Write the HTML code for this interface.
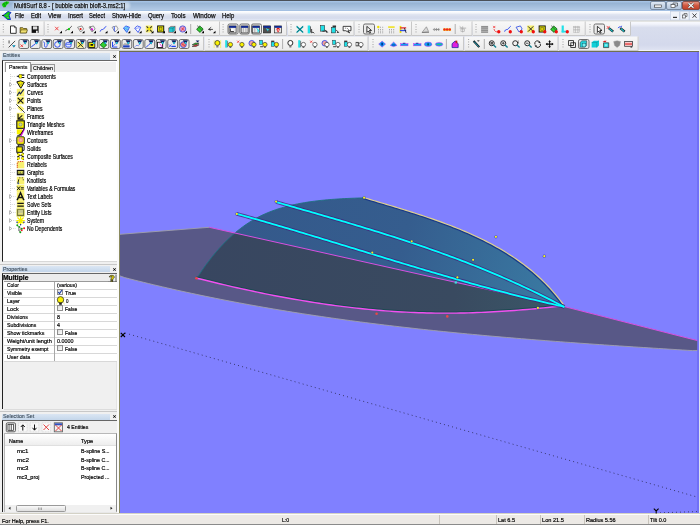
<!DOCTYPE html><html><head><meta charset="utf-8"><style>
html,body{margin:0;padding:0;width:700px;height:525px;overflow:hidden;background:#f0f0f0;position:relative;font-family:"Liberation Sans",sans-serif;}
.t{position:absolute;white-space:nowrap;line-height:1;transform-origin:0 0;}
svg{position:absolute;left:0;top:0;}
</style></head><body>
<div style="position:absolute;left:0px;top:0px;width:700px;height:11px;background:linear-gradient(#4a5058 0px,#4a5058 1px,#a8c8ee 1px,#a0bcdc 2px,#98b4d4 3.5px,#b0c8e4 9.5px,#a4c0e2 10px,#a4c0e2 11px);"></div>
<div style="position:absolute;left:12.5px;top:1.8px;width:117px;height:7.6px;background:rgba(235,242,250,0.55);filter:blur(0.8px);border-radius:3px;"></div>
<div class="t" style="left:13.60px;top:3.19px;font-size:6.45px;font-weight:normal;color:#111;transform:scaleX(0.906) translateZ(0);-webkit-text-stroke:0.25px #111;">MultiSurf 8.8 - [ bubble cabin bloft-3.ms2:1]</div>
<svg width="12" height="10" viewBox="0 0 12 10" style="position:absolute;left:0;top:0"><path d="M1.5,4 L4,2 L6.5,1 L9.5,1.5 L9,3.5 L7,5 L5.5,7.5 L3.5,7.8 L2,6 Z" fill="#10d010" stroke="#d8a8f0" stroke-width="0.5"/><circle cx="4" cy="4" r="0.8" fill="#0a800a"/><circle cx="6.5" cy="3" r="0.8" fill="#0a800a"/><circle cx="5" cy="6" r="0.7" fill="#0a800a"/></svg>
<svg width="52" height="12" viewBox="0 0 52 12" style="position:absolute;left:649px;top:0"><rect x="1.5" y="1.5" width="15" height="8" rx="1.5" fill="url(#wb)" stroke="#6a7c94" stroke-width="0.8"/><rect x="17.5" y="1.5" width="15" height="8" rx="1.5" fill="url(#wb)" stroke="#6a7c94" stroke-width="0.8"/><rect x="33.5" y="1.5" width="17" height="8" rx="1.5" fill="url(#wr)" stroke="#7a3a30" stroke-width="0.8"/><rect x="5.5" y="5" width="7" height="2.2" fill="#fff" stroke="#333" stroke-width="0.6"/><rect x="22" y="4.5" width="4" height="3" fill="#fff" stroke="#333" stroke-width="0.6"/><path d="M24,4.5 V3 H28.5 V6 H26" fill="none" stroke="#333" stroke-width="0.6"/><path d="M39.5,3.2 L44.5,7.8 M44.5,3.2 L39.5,7.8" stroke="#333" stroke-width="2.2"/><path d="M39.5,3.2 L44.5,7.8 M44.5,3.2 L39.5,7.8" stroke="#fff" stroke-width="1.2"/><defs><linearGradient id="wb" x1="0" y1="0" x2="0" y2="1"><stop offset="0" stop-color="#e4ecf6"/><stop offset="0.5" stop-color="#c8d6e8"/><stop offset="1" stop-color="#b0c4dc"/></linearGradient><linearGradient id="wr" x1="0" y1="0" x2="0" y2="1"><stop offset="0" stop-color="#e8a090"/><stop offset="0.5" stop-color="#d05840"/><stop offset="1" stop-color="#c04028"/></linearGradient></defs></svg>
<div style="position:absolute;left:0px;top:11px;width:700px;height:10px;background:linear-gradient(#ffffff 0px,#f4f6fb 2px,#e0e5f1 3.5px,#d6dcec 6px,#d8deee 8px,#e4eaf8 9px,#e6ecf8 10px);"></div>
<svg width="14" height="10" viewBox="0 0 14 10" style="position:absolute;left:0;top:11px"><path d="M3,4.5 L8,0.5 L11,1.5 L9,4 L10.5,8.5 L7.5,8.5 Z" fill="#10d010" stroke="#1020d0" stroke-width="0.9"/><path d="M2,4.5 H4" stroke="#111" stroke-width="0.9"/><circle cx="7" cy="4" r="0.6" fill="#c070c0"/><circle cx="8" cy="6.5" r="0.6" fill="#c070c0"/></svg>
<div class="t" style="left:15.00px;top:13.26px;font-size:6.72px;font-weight:normal;color:#111;transform:scaleX(0.831) translateZ(0);-webkit-text-stroke:0.25px #111;">File</div>
<div class="t" style="left:31.00px;top:13.26px;font-size:6.72px;font-weight:normal;color:#111;transform:scaleX(0.863) translateZ(0);-webkit-text-stroke:0.25px #111;">Edit</div>
<div class="t" style="left:48.00px;top:13.26px;font-size:6.72px;font-weight:normal;color:#111;transform:scaleX(0.900) translateZ(0);-webkit-text-stroke:0.25px #111;">View</div>
<div class="t" style="left:67.50px;top:13.26px;font-size:6.72px;font-weight:normal;color:#111;transform:scaleX(0.892) translateZ(0);-webkit-text-stroke:0.25px #111;">Insert</div>
<div class="t" style="left:89.00px;top:13.26px;font-size:6.72px;font-weight:normal;color:#111;transform:scaleX(0.857) translateZ(0);-webkit-text-stroke:0.25px #111;">Select</div>
<div class="t" style="left:112.00px;top:13.26px;font-size:6.72px;font-weight:normal;color:#111;transform:scaleX(0.882) translateZ(0);-webkit-text-stroke:0.25px #111;">Show-Hide</div>
<div class="t" style="left:148.00px;top:13.26px;font-size:6.72px;font-weight:normal;color:#111;transform:scaleX(0.874) translateZ(0);-webkit-text-stroke:0.25px #111;">Query</div>
<div class="t" style="left:171.00px;top:13.26px;font-size:6.72px;font-weight:normal;color:#111;transform:scaleX(0.924) translateZ(0);-webkit-text-stroke:0.25px #111;">Tools</div>
<div class="t" style="left:192.50px;top:13.26px;font-size:6.72px;font-weight:normal;color:#111;transform:scaleX(0.941) translateZ(0);-webkit-text-stroke:0.25px #111;">Window</div>
<div class="t" style="left:221.75px;top:13.26px;font-size:6.72px;font-weight:normal;color:#111;transform:scaleX(0.886) translateZ(0);-webkit-text-stroke:0.25px #111;">Help</div>
<svg width="32" height="10" viewBox="0 0 32 10" style="position:absolute;left:669px;top:11px"><rect x="1.5" y="0.5" width="9" height="8.5" fill="#f0f3fa" stroke="#c0cce0" stroke-width="0.6"/><rect x="11" y="0.5" width="9" height="8.5" fill="#f0f3fa" stroke="#c0cce0" stroke-width="0.6"/><rect x="20.5" y="0.5" width="10" height="8.5" fill="#f0f3fa" stroke="#c0cce0" stroke-width="0.6"/><rect x="4" y="5.8" width="4" height="1.2" fill="#333"/><rect x="13.5" y="4" width="3" height="3" fill="none" stroke="#555" stroke-width="0.7"/><path d="M15,4 V2.5 H18 V5.5 H16.5" fill="none" stroke="#555" stroke-width="0.7"/><path d="M23.5,2.5 L27.5,6.8 M27.5,2.5 L23.5,6.8" stroke="#333" stroke-width="0.9"/></svg>
<svg width="700" height="52" viewBox="0 0 700 52" style="position:absolute;left:0;top:0"><defs><linearGradient id="tbg" x1="0" y1="0" x2="0" y2="1"><stop offset="0" stop-color="#f8f8f8"/><stop offset="1" stop-color="#ebebeb"/></linearGradient><linearGradient id="rbg" x1="0" y1="0" x2="0" y2="1"><stop offset="0" stop-color="#fbfcff"/><stop offset="0.1" stop-color="#f2f4fb"/><stop offset="0.22" stop-color="#d8dded"/><stop offset="0.8" stop-color="#d4d9ec"/><stop offset="0.97" stop-color="#dfe3f2"/></linearGradient></defs><rect x="0" y="21" width="700" height="30" fill="url(#rbg)"/><rect x="0" y="20.6" width="700" height="0.8" fill="#c4c2b8"/><rect x="0" y="50" width="700" height="1" fill="#f2f4fa"/><rect x="0" y="21.5" width="44.6" height="14.5" fill="url(#tbg)"/><path d="M44.1,21.5 V35.5 H0" fill="none" stroke="#c8c8c8" stroke-width="1"/><rect x="45" y="21.5" width="175" height="14.5" fill="url(#tbg)"/><path d="M219.5,21.5 V35.5 H45" fill="none" stroke="#c8c8c8" stroke-width="1"/><rect x="220" y="21.5" width="67" height="14.5" fill="url(#tbg)"/><path d="M286.5,21.5 V35.5 H220" fill="none" stroke="#c8c8c8" stroke-width="1"/><rect x="288" y="21.5" width="66.5" height="14.5" fill="url(#tbg)"/><path d="M354.0,21.5 V35.5 H288" fill="none" stroke="#c8c8c8" stroke-width="1"/><rect x="355" y="21.5" width="57" height="14.5" fill="url(#tbg)"/><path d="M411.5,21.5 V35.5 H355" fill="none" stroke="#c8c8c8" stroke-width="1"/><rect x="412" y="21.5" width="60.5" height="14.5" fill="url(#tbg)"/><path d="M472.0,21.5 V35.5 H412" fill="none" stroke="#c8c8c8" stroke-width="1"/><rect x="473" y="21.5" width="112.70000000000005" height="14.5" fill="url(#tbg)"/><path d="M585.2,21.5 V35.5 H473" fill="none" stroke="#c8c8c8" stroke-width="1"/><rect x="586" y="21.5" width="45" height="14.5" fill="url(#tbg)"/><path d="M630.5,21.5 V35.5 H586" fill="none" stroke="#c8c8c8" stroke-width="1"/><path d="M3.3,24 V34" stroke="#909090" stroke-width="0.9" stroke-dasharray="0.9,1.6"/><path d="M48,24 V34" stroke="#909090" stroke-width="0.9" stroke-dasharray="0.9,1.6"/><path d="M223.1,24 V34" stroke="#909090" stroke-width="0.9" stroke-dasharray="0.9,1.6"/><path d="M291,24 V34" stroke="#909090" stroke-width="0.9" stroke-dasharray="0.9,1.6"/><path d="M359,24 V34" stroke="#909090" stroke-width="0.9" stroke-dasharray="0.9,1.6"/><path d="M416,24 V34" stroke="#909090" stroke-width="0.9" stroke-dasharray="0.9,1.6"/><path d="M476,24 V34" stroke="#909090" stroke-width="0.9" stroke-dasharray="0.9,1.6"/><path d="M590,24 V34" stroke="#909090" stroke-width="0.9" stroke-dasharray="0.9,1.6"/><path d="M190.7,24 V34" stroke="#a8a8a8" stroke-width="0.9"/><path d="M455.2,24 V34" stroke="#a8a8a8" stroke-width="0.9"/><g transform="translate(9.2,25.5) scale(0.87)"><path d="M1.5,0.5 h4.5 l2,2 v6.5 h-6.5 z" fill="#fff" stroke="#000" stroke-width="0.9"/><path d="M6,0.5 v2 h2" fill="none" stroke="#000" stroke-width="0.6"/></g><g transform="translate(19.7,25.5) scale(0.87)"><path d="M0.5,2.5 h3 l1,1 h3.5 v5 h-7.5 z" fill="#d8c040" stroke="#3a3000" stroke-width="0.8"/><path d="M1.5,5 h7.5 l-1.5,3.5 h-7 z" fill="#f0e070" stroke="#3a3000" stroke-width="0.6"/></g><g transform="translate(31.2,25.5) scale(0.87)"><rect x="0.5" y="0.5" width="8" height="8" fill="#111"/><rect x="2" y="1" width="5" height="3.5" fill="#ddd"/><rect x="5.5" y="6" width="2" height="2.5" fill="#eee"/></g><g transform="translate(54.2,25.5) scale(0.87)"><path d="M1,1.5 L5,5.5 M5,1.5 L1,5.5" stroke="#f03030" stroke-width="1"/><path d="M6,9 L9,9 L9,6 Z" fill="#000"/></g><g transform="translate(65.2,25.5) scale(0.87)"><path d="M0.5,6.5 C2,3 3,6 5,3.5 S7,1 7.5,1" fill="none" stroke="#222" stroke-width="1"/><circle cx="4.3" cy="4.2" r="1.3" fill="#10d010"/><path d="M6,9 L9,9 L9,6 Z" fill="#000"/></g><g transform="translate(76.7,25.5) scale(0.87)"><path d="M1,2 L6,0.5 L8,4 L4.5,7.5 Z" fill="#f4f4f4" stroke="#666" stroke-width="0.8"/><circle cx="4.5" cy="4" r="1.2" fill="#e01010"/><path d="M6,9 L9,9 L9,6 Z" fill="#000"/></g><g transform="translate(88.2,25.5) scale(0.87)"><path d="M1,2 L6,0.5 L8,4 L4.5,7.5 Z" fill="#f4f4f4" stroke="#666" stroke-width="0.8"/><path d="M2,1 L5,6" stroke="#222" stroke-width="0.8"/><circle cx="4.5" cy="4.5" r="1.2" fill="#e010e0"/><path d="M6,9 L9,9 L9,6 Z" fill="#000"/></g><g transform="translate(99.7,25.5) scale(0.87)"><path d="M0.5,7 C2,3 3,6 5,3.5 S7,1 7.5,1" fill="none" stroke="#1a3af0" stroke-width="1.1"/><path d="M6,9 L9,9 L9,6 Z" fill="#000"/></g><g transform="translate(111.2,25.5) scale(0.87)"><path d="M1,2 L6,0.5 L8,4 L4.5,7.5 Z" fill="#f4f4f4" stroke="#777" stroke-width="0.8"/><path d="M3,1 C5,3 2,5 4.5,7" fill="none" stroke="#2040f0" stroke-width="1"/><path d="M6,9 L9,9 L9,6 Z" fill="#000"/></g><g transform="translate(122.5,25.5) scale(0.87)"><path d="M1,3 L4,0.5 L8,2 L5,8 Z" fill="#80f0f8" stroke="#2040f0" stroke-width="0.9"/><path d="M2,3.5 L6.5,2.5 M3,5.5 L6,4.5" stroke="#2040f0" stroke-width="0.6"/><path d="M6,9 L9,9 L9,6 Z" fill="#000"/></g><g transform="translate(133.79999999999998,25.5) scale(0.87)"><path d="M1,3 L4,0.5 L8,2 L5,8 Z" fill="#fff" stroke="#2040f0" stroke-width="0.9"/><path d="M2,3.5 L6.5,2.5" stroke="#2040f0" stroke-width="0.6"/><path d="M6,9 L9,9 L9,6 Z" fill="#000"/></g><g transform="translate(145.7,25.5) scale(0.87)"><rect x="0" y="0" width="8" height="8" fill="#f8f070"/><path d="M1,1 L7,7 M7,1 L1,7" stroke="#222" stroke-width="1.2"/><rect x="2.5" y="2.5" width="3" height="3" fill="#f0e000"/><path d="M6,9 L9,9 L9,6 Z" fill="#000"/></g><g transform="translate(157.2,25.5) scale(0.87)"><rect x="0.5" y="0.5" width="7" height="7" fill="#f0f000" stroke="#111" stroke-width="1.1"/><rect x="2.5" y="2.5" width="3" height="3" fill="#e0d000" stroke="#333" stroke-width="0.5"/><path d="M6,9 L9,9 L9,6 Z" fill="#000"/></g><g transform="translate(168.2,25.5) scale(0.87)"><path d="M0.5,3 L3,1 H8 V6 L5.5,8 H0.5 Z" fill="#20c8d0" stroke="#c04040" stroke-width="0.6"/><path d="M0.5,3 H5.5 V8 M5.5,3 L8,1" fill="none" stroke="#106070" stroke-width="0.6"/><path d="M6,9 L9,9 L9,6 Z" fill="#000"/></g><g transform="translate(179.2,25.5) scale(0.87)"><circle cx="4" cy="4" r="3.6" fill="#e8a0c8" stroke="#3050e0" stroke-width="0.9"/><path d="M2.5,2.5 L6,6 M5.5,2 L2.5,6" stroke="#e02020" stroke-width="0.8"/><path d="M6,9 L9,9 L9,6 Z" fill="#000"/></g><g transform="translate(196.2,25.5) scale(0.87)"><path d="M4,0.5 L8,4 L4.5,8 L0.5,4.5 Z" fill="#30d030" stroke="#105010" stroke-width="0.9"/><path d="M1,0 L8,7" stroke="#222" stroke-width="0.6"/><path d="M6,9 L9,9 L9,6 Z" fill="#000"/></g><g transform="translate(207.7,25.5) scale(0.87)"><path d="M1,4.5 L4,2 M1,4.5 L3.5,5.5 M1,4.5 H6" stroke="#222" stroke-width="0.9" fill="none"/><path d="M6,9 L9,9 L9,6 Z" fill="#000"/></g><g transform="translate(296.2,25.5) scale(0.87)"><path d="M0.5,1 L8,8 M8,1 L0.5,8" stroke="#10c0d0" stroke-width="1.6"/><path d="M0.5,1 L8,8 M8,1 L0.5,8" stroke="#111" stroke-width="0.6"/></g><g transform="translate(307.7,25.5) scale(0.87)"><rect x="0" y="0" width="2.8" height="9" fill="#20e0e8"/><rect x="2.8" y="1" width="1" height="7" fill="#555"/><path d="M4.5,4 V8.5 L6,7.5 L7.5,9" fill="none" stroke="#111" stroke-width="0.9"/></g><g transform="translate(320.7,25.5) scale(0.87)"><rect x="0" y="0" width="4.5" height="6.5" fill="#20e0e8" stroke="#222" stroke-width="0.6"/><path d="M2,6.5 H7 V8.5 M5,5 L8,8" fill="none" stroke="#111" stroke-width="0.9"/></g><g transform="translate(331.7,25.5) scale(0.87)"><rect x="0" y="2" width="4.5" height="6.5" fill="#20e0e8" stroke="#222" stroke-width="0.6"/><rect x="1" y="0" width="4" height="2" fill="#333"/><path d="M5,5 L8,8 L6,8" fill="none" stroke="#111" stroke-width="0.9"/></g><g transform="translate(342.7,25.5) scale(0.87)"><path d="M0.5,1 H9.5 V6 H6 L8,8.5 L3.5,6 H0.5 Z" fill="#fff" stroke="#111" stroke-width="0.9"/><path d="M2.5,3 h1.5 M5,3 L7,5" stroke="#333" stroke-width="0.7"/></g><g transform="translate(376.7,25.5) scale(0.87)"><circle cx="1.8" cy="1.8" r="1.4" fill="#f0e000"/><rect x="1.5" y="4" width="0.9" height="0.9" fill="#777"/><rect x="1.5" y="6" width="0.9" height="0.9" fill="#777"/><rect x="1.5" y="8" width="0.9" height="0.9" fill="#777"/><rect x="4" y="4" width="0.9" height="0.9" fill="#777"/><rect x="4" y="6" width="0.9" height="0.9" fill="#777"/><rect x="4" y="8" width="0.9" height="0.9" fill="#777"/><rect x="6.5" y="4" width="0.9" height="0.9" fill="#777"/><rect x="6.5" y="6" width="0.9" height="0.9" fill="#777"/><rect x="6.5" y="8" width="0.9" height="0.9" fill="#777"/><rect x="4" y="1.5" width="0.9" height="0.9" fill="#777"/><rect x="6.5" y="1.5" width="0.9" height="0.9" fill="#777"/></g><g transform="translate(387.7,25.5) scale(0.87)"><rect x="0.5" y="1" width="7.5" height="1.6" fill="#f0e000"/><rect x="1.5" y="4" width="0.9" height="0.9" fill="#777"/><rect x="1.5" y="6" width="0.9" height="0.9" fill="#777"/><rect x="1.5" y="8" width="0.9" height="0.9" fill="#777"/><rect x="4" y="4" width="0.9" height="0.9" fill="#777"/><rect x="4" y="6" width="0.9" height="0.9" fill="#777"/><rect x="4" y="8" width="0.9" height="0.9" fill="#777"/><rect x="6.5" y="4" width="0.9" height="0.9" fill="#777"/><rect x="6.5" y="6" width="0.9" height="0.9" fill="#777"/><rect x="6.5" y="8" width="0.9" height="0.9" fill="#777"/></g><g transform="translate(399.2,25.5) scale(0.87)"><rect x="0.5" y="0.5" width="2" height="8" fill="#f0e000"/><rect x="1" y="2" width="7" height="1.5" fill="#e03030"/><rect x="1" y="5" width="7" height="1.5" fill="#3050e0"/><path d="M6,3 L8,8.5" stroke="#111" stroke-width="0.9"/></g><g transform="translate(421.2,25.5) scale(0.87)"><path d="M1,8 L6,1.5 L8.5,7 Z" fill="#d8d8d8" stroke="#888" stroke-width="0.8"/><path d="M1,8 H9" stroke="#666" stroke-width="0.8"/></g><g transform="translate(432.2,25.5) scale(0.87)"><path d="M0.5,4.5 L3,2.5 V6.5 Z M3,4.5 L5.5,2.5 V6.5 Z M5.5,4.5 L8,2.5 V6.5 Z" fill="#999"/><rect x="3" y="4" width="5.5" height="1" fill="#888"/></g><g transform="translate(443.2,25.5) scale(0.87)"><rect x="0" y="3.5" width="9" height="2.5" fill="#f0e000"/><circle cx="1.5" cy="4.7" r="1.4" fill="#f02020"/><circle cx="4.5" cy="4.7" r="1.4" fill="#f02020"/><circle cx="7.5" cy="4.7" r="1.4" fill="#f02020"/></g><g transform="translate(459.2,25.5) scale(0.87)"><path d="M0.5,1 L4,4 M0.5,3 L8,3 M4,1 V8" stroke="#aaa" stroke-width="0.9"/><rect x="2" y="4" width="4" height="3" fill="none" stroke="#aaa" stroke-width="0.7"/></g><g transform="translate(480.7,25.5) scale(0.87)"><rect x="0.5" y="0.5" width="8" height="8" fill="#909090"/><rect x="0.5" y="2.5" width="8" height="0.6" fill="#c8c8c8"/><rect x="0.5" y="4.5" width="8" height="0.6" fill="#c8c8c8"/><rect x="0.5" y="6.5" width="8" height="0.6" fill="#c8c8c8"/></g><g transform="translate(492.7,25.5) scale(0.87)"><path d="M0.5,0.5 L3,3 M3,0.5 L0.5,3" stroke="#f02020" stroke-width="0.8"/><path d="M1.5,4 C2,7 4,7.5 6,7.3" fill="none" stroke="#f02020" stroke-width="0.9"/><circle cx="7" cy="7.2" r="1.9" fill="#f01010"/></g><g transform="translate(504.2,25.5) scale(0.87)"><path d="M0.5,7 C2,3 3,6 5,3.5 S7,1 7.5,1" fill="none" stroke="#1a3af0" stroke-width="1.1"/><circle cx="7" cy="7.2" r="1.9" fill="#f01010"/></g><g transform="translate(515.2,25.5) scale(0.87)"><path d="M1,2 L6,0.5 L8,4 L4.5,7.5 Z" fill="#f4f4f4" stroke="#2040e0" stroke-width="0.9"/><circle cx="7" cy="7.2" r="1.9" fill="#f01010"/></g><g transform="translate(527.2,25.5) scale(0.87)"><rect x="0" y="0" width="8" height="8" fill="#f8f070"/><path d="M1,1 L7,7 M7,1 L1,7" stroke="#222" stroke-width="1.1"/><circle cx="7" cy="7.2" r="1.9" fill="#f01010"/></g><g transform="translate(538.7,25.5) scale(0.87)"><rect x="0.5" y="0.5" width="7" height="7" fill="#f0f000" stroke="#111" stroke-width="1.1"/><rect x="2.5" y="2.5" width="3" height="3" fill="#e0d000" stroke="#333" stroke-width="0.5"/><circle cx="7" cy="7.2" r="1.9" fill="#f01010"/></g><g transform="translate(550.2,25.5) scale(0.87)"><path d="M4,0.5 L8,4 L4.5,8 L0.5,4.5 Z" fill="#30d030" stroke="#105010" stroke-width="0.9"/><path d="M1,0 L8,7" stroke="#222" stroke-width="0.6"/><circle cx="7" cy="7.2" r="1.9" fill="#f01010"/></g><g transform="translate(561.2,25.5) scale(0.87)"><rect x="0.5" y="0" width="2.5" height="8" fill="#20e0e8"/><rect x="0.5" y="6" width="6" height="2" fill="#20e0e8"/><circle cx="7" cy="7.2" r="1.9" fill="#f01010"/></g><g transform="translate(572.7,25.5) scale(0.87)"><path d="M0.5,2 H8.5 M0.5,5 H8.5 M3,0.5 V8.5 M6,0.5 V8.5" stroke="#aaa" stroke-width="0.8"/><rect x="1" y="1" width="7" height="7" fill="none" stroke="#bbb" stroke-width="0.6"/></g><g transform="translate(606.2,25.5) scale(0.87)"><path d="M0.5,0.5 L4,4 M4,0.5 L0.5,4" stroke="#f02020" stroke-width="0.8"/><path d="M3,3 L8,7" stroke="#111" stroke-width="2.8"/><path d="M3.5,3.5 L7.5,6.8" stroke="#20c0c8" stroke-width="1.4"/></g><g transform="translate(617.7,25.5) scale(0.87)"><path d="M0.5,3 C2,0 3,3 5,0.5" fill="none" stroke="#2040f0" stroke-width="1"/><path d="M3,3 L8,7" stroke="#111" stroke-width="2.8"/><path d="M3.5,3.5 L7.5,6.8" stroke="#20c0c8" stroke-width="1.4"/></g><rect x="228.0" y="24.0" width="10.0" height="10.0" rx="1.6" fill="#ececec" stroke="#6e6e6e" stroke-width="1"/><rect x="239.8" y="24.0" width="9.5" height="10.0" rx="1.6" fill="#ececec" stroke="#6e6e6e" stroke-width="1"/><rect x="251.5" y="24.0" width="10" height="10.0" rx="1.6" fill="#ececec" stroke="#6e6e6e" stroke-width="1"/><g transform="translate(228.7,25.5) scale(0.87)"><rect x="0.5" y="0.5" width="8" height="8" fill="#e8e8e8" stroke="#333" stroke-width="0.8"/><rect x="0.5" y="0.5" width="8" height="2.2" fill="#102890"/><path d="M2,3.5 V7 H6" fill="none" stroke="#000" stroke-width="0.9"/><rect x="2.5" y="4" width="3" height="2" fill="#fff"/></g><g transform="translate(240.7,25.5) scale(0.87)"><rect x="0.5" y="0.5" width="8" height="8" fill="#e8e8e8" stroke="#333" stroke-width="0.8"/><rect x="0.5" y="0.5" width="8" height="2.2" fill="#102890"/><path d="M3,3 V8 M6,3 V8" stroke="#888" stroke-width="0.7"/></g><g transform="translate(252.2,25.5) scale(0.87)"><rect x="0.5" y="0.5" width="8" height="8" fill="#e8e8e8" stroke="#333" stroke-width="0.8"/><rect x="0.5" y="0.5" width="8" height="2.2" fill="#102890"/><path d="M3,3 V8" stroke="#888" stroke-width="0.7"/><path d="M5,3 L8,6 L6.5,6.5 L7,8" fill="#20d8e8" stroke="#20d8e8" stroke-width="1"/></g><g transform="translate(263.2,25.5) scale(0.87)"><rect x="0.5" y="0.5" width="8" height="8" fill="#505050" stroke="#222" stroke-width="0.8"/><rect x="0.5" y="0.5" width="8" height="2.2" fill="#102890"/><path d="M3,3 L7,5 L5,6 L6,8" fill="#30e0f0"/></g><g transform="translate(274.2,25.5) scale(0.87)"><rect x="0.5" y="0.5" width="8" height="8" fill="#e8e8e8" stroke="#333" stroke-width="0.8"/><rect x="0.5" y="0.5" width="8" height="2.2" fill="#102890"/><path d="M4.5,3 C7,3 7,5 4.5,8 C2,5 2,3 4.5,3Z" fill="#e01010"/><rect x="4" y="4" width="1" height="2.5" fill="#fff"/></g><rect x="363.5" y="24.0" width="11" height="10.0" rx="1.6" fill="#ececec" stroke="#6e6e6e" stroke-width="1"/><g transform="translate(364.7,25.5) scale(0.87)"><path d="M2.5,1 V8 L4.2,6.3 L5.6,8.8 L6.8,8.2 L5.4,5.7 H7.8 Z" fill="#fff" stroke="#000" stroke-width="0.9"/></g><rect x="594.0" y="24.0" width="10.5" height="10.0" rx="1.6" fill="#ececec" stroke="#6e6e6e" stroke-width="1"/><g transform="translate(595.2,25.5) scale(0.87)"><path d="M2.5,1 V8 L4.2,6.3 L5.6,8.8 L6.8,8.2 L5.4,5.7 H7.8 Z" fill="#fff" stroke="#000" stroke-width="0.9"/></g><rect x="0" y="36.5" width="204" height="14.5" fill="url(#tbg)"/><path d="M203.5,36.5 V50.5 H0" fill="none" stroke="#c8c8c8" stroke-width="1"/><rect x="204.5" y="36.5" width="164.0" height="14.5" fill="url(#tbg)"/><path d="M368.0,36.5 V50.5 H204.5" fill="none" stroke="#c8c8c8" stroke-width="1"/><rect x="369" y="36.5" width="95" height="14.5" fill="url(#tbg)"/><path d="M463.5,36.5 V50.5 H369" fill="none" stroke="#c8c8c8" stroke-width="1"/><rect x="464.5" y="36.5" width="94.0" height="14.5" fill="url(#tbg)"/><path d="M558.0,36.5 V50.5 H464.5" fill="none" stroke="#c8c8c8" stroke-width="1"/><rect x="559" y="36.5" width="79.60000000000002" height="14.5" fill="url(#tbg)"/><path d="M638.1,36.5 V50.5 H559" fill="none" stroke="#c8c8c8" stroke-width="1"/><path d="M3.3,39 V49" stroke="#909090" stroke-width="0.9" stroke-dasharray="0.9,1.6"/><path d="M209,39 V49" stroke="#909090" stroke-width="0.9" stroke-dasharray="0.9,1.6"/><path d="M373,39 V49" stroke="#909090" stroke-width="0.9" stroke-dasharray="0.9,1.6"/><path d="M468.6,39 V49" stroke="#909090" stroke-width="0.9" stroke-dasharray="0.9,1.6"/><path d="M563,39 V49" stroke="#909090" stroke-width="0.9" stroke-dasharray="0.9,1.6"/><path d="M282.6,39 V49" stroke="#a8a8a8" stroke-width="0.9"/><path d="M446.4,39 V49" stroke="#a8a8a8" stroke-width="0.9"/><path d="M484.3,39 V49" stroke="#a8a8a8" stroke-width="0.9"/><g transform="translate(8.2,40.0) scale(0.87)"><path d="M1,0.5 V4 M0.5,8.5 L8,1" stroke="#222" stroke-width="0.9"/><path d="M4.5,6 H8.5 L6.5,8.5 Z" fill="#102060"/><circle cx="6.5" cy="6.7" r="1" fill="#20e0f0"/></g><rect x="18.9" y="39.5" width="9.8" height="9" rx="1.6" fill="#ececec" stroke="#6e6e6e" stroke-width="1"/><g transform="translate(19.599999999999998,40.1) scale(0.87)"><path d="M1,5 L4,8 M4,5 L1,8" stroke="#f02020" stroke-width="0.9"/><path d="M3.3,0.2 H9.4 L6.4,5.2 Z" fill="#102060"/><circle cx="6.4" cy="3.2" r="1.1" fill="#20e0f0"/></g><rect x="30.349999999999998" y="39.5" width="9.8" height="9" rx="1.6" fill="#ececec" stroke="#6e6e6e" stroke-width="1"/><g transform="translate(31.049999999999997,40.1) scale(0.87)"><path d="M0.5,8 C2,5 3,7 5,4 S7,2 8,1.5" fill="none" stroke="#2040f0" stroke-width="1.1"/><path d="M3.3,0.2 H9.4 L6.4,5.2 Z" fill="#102060"/><circle cx="6.4" cy="3.2" r="1.1" fill="#20e0f0"/></g><rect x="41.8" y="39.5" width="9.799999999999997" height="9" rx="1.6" fill="#ececec" stroke="#6e6e6e" stroke-width="1"/><g transform="translate(42.5,40.1) scale(0.87)"><path d="M1,2 C4,3 1,6 3,8 C5,9 6,6 5,4" fill="none" stroke="#2040f0" stroke-width="1"/><path d="M3.3,0.2 H9.4 L6.4,5.2 Z" fill="#102060"/><circle cx="6.4" cy="3.2" r="1.1" fill="#20e0f0"/></g><rect x="53.24999999999999" y="39.5" width="9.800000000000004" height="9" rx="1.6" fill="#ececec" stroke="#6e6e6e" stroke-width="1"/><g transform="translate(53.949999999999996,40.1) scale(0.87)"><circle cx="4" cy="5" r="3.2" fill="none" stroke="#2040f0" stroke-width="1"/><path d="M3.3,0.2 H9.4 L6.4,5.2 Z" fill="#102060"/><circle cx="6.4" cy="3.2" r="1.1" fill="#20e0f0"/></g><rect x="64.69999999999999" y="39.5" width="9.799999999999997" height="9" rx="1.6" fill="#ececec" stroke="#6e6e6e" stroke-width="1"/><g transform="translate(65.39999999999999,40.1) scale(0.87)"><rect x="0.5" y="3" width="6" height="5" rx="1.5" fill="#e0e8ff" stroke="#2040f0" stroke-width="1"/><path d="M1,5 H6" stroke="#2040f0" stroke-width="0.7"/><path d="M3.3,0.2 H9.4 L6.4,5.2 Z" fill="#102060"/><circle cx="6.4" cy="3.2" r="1.1" fill="#20e0f0"/></g><rect x="76.15" y="39.5" width="9.799999999999997" height="9" rx="1.6" fill="#ececec" stroke="#6e6e6e" stroke-width="1"/><g transform="translate(76.85000000000001,40.1) scale(0.87)"><rect x="0.5" y="2" width="7" height="6.5" fill="#f8f070"/><path d="M1,2 L7.5,8.5 M7.5,2 L1,8.5" stroke="#222" stroke-width="1.1"/><path d="M3.3,0.2 H9.4 L6.4,5.2 Z" fill="#102060"/><circle cx="6.4" cy="3.2" r="1.1" fill="#20e0f0"/></g><rect x="87.6" y="39.5" width="9.799999999999997" height="9" rx="1.6" fill="#ececec" stroke="#6e6e6e" stroke-width="1"/><g transform="translate(88.3,40.1) scale(0.87)"><rect x="0.5" y="2.5" width="7" height="6" fill="#f0f000" stroke="#111" stroke-width="1"/><rect x="2.5" y="4.5" width="3" height="2" fill="#111"/><path d="M3.3,0.2 H9.4 L6.4,5.2 Z" fill="#102060"/><circle cx="6.4" cy="3.2" r="1.1" fill="#20e0f0"/></g><rect x="99.04999999999998" y="39.5" width="9.799999999999997" height="9" rx="1.6" fill="#ececec" stroke="#6e6e6e" stroke-width="1"/><g transform="translate(99.74999999999999,40.1) scale(0.87)"><path d="M4,2 L8,5.5 L4.5,9 L0.5,5.5 Z" fill="#30d030" stroke="#105010" stroke-width="0.9"/><path d="M3.3,0.2 H9.4 L6.4,5.2 Z" fill="#102060"/><circle cx="6.4" cy="3.2" r="1.1" fill="#20e0f0"/></g><rect x="110.5" y="39.5" width="9.799999999999997" height="9" rx="1.6" fill="#ececec" stroke="#6e6e6e" stroke-width="1"/><g transform="translate(111.2,40.1) scale(0.87)"><path d="M1.5,2 V8 H7" fill="none" stroke="#2040f0" stroke-width="1.1"/><path d="M2,7 L5,4" stroke="#2040f0" stroke-width="0.8"/><path d="M3.3,0.2 H9.4 L6.4,5.2 Z" fill="#102060"/><circle cx="6.4" cy="3.2" r="1.1" fill="#20e0f0"/></g><rect x="121.94999999999999" y="39.5" width="9.800000000000011" height="9" rx="1.6" fill="#ececec" stroke="#6e6e6e" stroke-width="1"/><g transform="translate(122.64999999999999,40.1) scale(0.87)"><rect x="0.5" y="6" width="7.5" height="2.5" fill="#2040c0"/><path d="M1,5 C3,3.5 5,6 8,4" fill="none" stroke="#333" stroke-width="0.7"/><path d="M3.3,0.2 H9.4 L6.4,5.2 Z" fill="#102060"/><circle cx="6.4" cy="3.2" r="1.1" fill="#20e0f0"/></g><rect x="133.4" y="39.5" width="9.800000000000011" height="9" rx="1.6" fill="#ececec" stroke="#6e6e6e" stroke-width="1"/><g transform="translate(134.1,40.1) scale(0.87)"><path d="M0.5,8 L3,6 L5,6.5 L8,2" fill="none" stroke="#2040f0" stroke-width="0.9" stroke-dasharray="1.2,0.8"/><path d="M3.3,0.2 H9.4 L6.4,5.2 Z" fill="#102060"/><circle cx="6.4" cy="3.2" r="1.1" fill="#20e0f0"/></g><rect x="144.85" y="39.5" width="9.800000000000011" height="9" rx="1.6" fill="#ececec" stroke="#6e6e6e" stroke-width="1"/><g transform="translate(145.54999999999998,40.1) scale(0.87)"><path d="M0.5,8.5 L4,5 L8,2" fill="none" stroke="#2040f0" stroke-width="1.1"/><path d="M3.3,0.2 H9.4 L6.4,5.2 Z" fill="#102060"/><circle cx="6.4" cy="3.2" r="1.1" fill="#20e0f0"/></g><rect x="156.29999999999998" y="39.5" width="9.800000000000011" height="9" rx="1.6" fill="#ececec" stroke="#6e6e6e" stroke-width="1"/><g transform="translate(156.99999999999997,40.1) scale(0.87)"><rect x="0.5" y="2.5" width="6" height="6" fill="#fff" stroke="#111" stroke-width="1"/><path d="M3,4 L6,8" stroke="#f010f0" stroke-width="0.9"/><path d="M3.3,0.2 H9.4 L6.4,5.2 Z" fill="#102060"/><circle cx="6.4" cy="3.2" r="1.1" fill="#20e0f0"/></g><rect x="167.75" y="39.5" width="9.800000000000011" height="9" rx="1.6" fill="#ececec" stroke="#6e6e6e" stroke-width="1"/><g transform="translate(168.45,40.1) scale(0.87)"><path d="M0.5,5 L3.5,8 M3.5,5 L0.5,8" stroke="#2040f0" stroke-width="0.8"/><rect x="3.5" y="6.5" width="5" height="1.5" fill="#2040f0"/><path d="M3.3,0.2 H9.4 L6.4,5.2 Z" fill="#102060"/><circle cx="6.4" cy="3.2" r="1.1" fill="#20e0f0"/></g><rect x="179.2" y="39.5" width="9.800000000000011" height="9" rx="1.6" fill="#ececec" stroke="#6e6e6e" stroke-width="1"/><g transform="translate(179.89999999999998,40.1) scale(0.87)"><circle cx="4" cy="5.2" r="3.4" fill="#f08080" stroke="#3050e0" stroke-width="1"/><path d="M2,4 L6,7" stroke="#d02020" stroke-width="0.8"/><path d="M3.3,0.2 H9.4 L6.4,5.2 Z" fill="#102060"/><circle cx="6.4" cy="3.2" r="1.1" fill="#20e0f0"/></g><g transform="translate(191.7,40.0) scale(0.87)"><path d="M0.5,5.5 L4,3.5 H8.5 L5,5.5 Z" fill="#30c030" stroke="#222" stroke-width="0.6"/><path d="M0.5,7.5 L4,5.5 H8.5 L5,7.5 Z" fill="#e04040" stroke="#222" stroke-width="0.6"/><path d="M4.5,0.5 H9 L6.8,3 Z" fill="#102060"/></g><g transform="translate(213.7,40.2) scale(0.87)"><path d="M0.5,0 V9 M8,0 V9" stroke="#f8f060" stroke-width="1"/><circle cx="4.2" cy="3.2" r="2.9" fill="#f8f000" stroke="#222" stroke-width="0.8"/><rect x="3.0" y="5.8" width="2.4" height="2.6" fill="#777"/></g><g transform="translate(225.2,40.2) scale(0.87)"><rect x="0" y="0" width="2.5" height="8.5" fill="#20e0e8"/><rect x="2.5" y="1" width="0.8" height="7" fill="#555"/><circle cx="6" cy="5" r="2.5" fill="#f8f000" stroke="#222" stroke-width="0.7"/><rect x="5" y="7.2" width="2" height="1.6" fill="#555"/></g><g transform="translate(236.7,40.2) scale(0.87)"><path d="M0.5,0.5 L3,3 M3,0.5 L0.5,3" stroke="#f02020" stroke-width="0.8"/><circle cx="6" cy="5" r="2.5" fill="#f8f000" stroke="#222" stroke-width="0.7"/><rect x="5" y="7.2" width="2" height="1.6" fill="#555"/></g><g transform="translate(248.7,40.2) scale(0.87)"><circle cx="3.5" cy="3.5" r="3.2" fill="#f0a0a0" stroke="#2040f0" stroke-width="0.9"/><circle cx="6" cy="5" r="2.5" fill="#f8f000" stroke="#222" stroke-width="0.7"/><rect x="5" y="7.2" width="2" height="1.6" fill="#555"/></g><g transform="translate(259.7,40.2) scale(0.87)"><rect x="0" y="0" width="3.5" height="5" fill="#20e0e8" stroke="#222" stroke-width="0.5"/><path d="M0.5,7.5 H4" stroke="#111" stroke-width="0.9"/><circle cx="6" cy="5" r="2.5" fill="#f8f000" stroke="#222" stroke-width="0.7"/><rect x="5" y="7.2" width="2" height="1.6" fill="#555"/></g><g transform="translate(271.2,40.2) scale(0.87)"><rect x="0" y="2" width="3.5" height="5" fill="#20e0e8" stroke="#222" stroke-width="0.5"/><rect x="0" y="0.5" width="3.5" height="1.5" fill="#333"/><circle cx="6" cy="5" r="2.5" fill="#f8f000" stroke="#222" stroke-width="0.7"/><rect x="5" y="7.2" width="2" height="1.6" fill="#555"/></g><g transform="translate(286.7,40.2) scale(0.87)"><circle cx="4.2" cy="3.2" r="2.9" fill="#fff" stroke="#222" stroke-width="1.1"/><rect x="3.0" y="5.8" width="2.4" height="2.6" fill="#777"/></g><g transform="translate(298.2,40.2) scale(0.87)"><rect x="0" y="0" width="2.5" height="8.5" fill="#20e0e8"/><rect x="2.5" y="1" width="0.8" height="7" fill="#555"/><circle cx="6" cy="5" r="2.5" fill="#fff" stroke="#222" stroke-width="0.7"/><rect x="5" y="7.2" width="2" height="1.6" fill="#555"/></g><g transform="translate(309.7,40.2) scale(0.87)"><path d="M0.5,0.5 L3,3 M3,0.5 L0.5,3" stroke="#f02020" stroke-width="0.8"/><circle cx="6" cy="5" r="2.5" fill="#fff" stroke="#222" stroke-width="0.7"/><rect x="5" y="7.2" width="2" height="1.6" fill="#555"/></g><g transform="translate(321.7,40.2) scale(0.87)"><circle cx="3.5" cy="3.5" r="3.2" fill="#f0a0a0" stroke="#2040f0" stroke-width="0.9"/><circle cx="6" cy="5" r="2.5" fill="#fff" stroke="#222" stroke-width="0.7"/><rect x="5" y="7.2" width="2" height="1.6" fill="#555"/></g><g transform="translate(332.7,40.2) scale(0.87)"><rect x="0" y="0" width="3.5" height="5" fill="#20e0e8" stroke="#222" stroke-width="0.5"/><path d="M0.5,7.5 H4" stroke="#111" stroke-width="0.9"/><circle cx="6" cy="5" r="2.5" fill="#fff" stroke="#222" stroke-width="0.7"/><rect x="5" y="7.2" width="2" height="1.6" fill="#555"/></g><g transform="translate(344.2,40.2) scale(0.87)"><rect x="0" y="2" width="3.5" height="5" fill="#20e0e8" stroke="#222" stroke-width="0.5"/><rect x="0" y="0.5" width="3.5" height="1.5" fill="#333"/><circle cx="6" cy="5" r="2.5" fill="#fff" stroke="#222" stroke-width="0.7"/><rect x="5" y="7.2" width="2" height="1.6" fill="#555"/></g><g transform="translate(355.7,40.2) scale(0.87)"><rect x="0" y="2" width="3.5" height="5" fill="#333"/><rect x="0.5" y="3" width="2" height="3" fill="#ddd"/><circle cx="6" cy="5" r="2.5" fill="#fff" stroke="#222" stroke-width="0.7"/><rect x="5" y="7.2" width="2" height="1.6" fill="#555"/></g><g transform="translate(378.2,40.2) scale(0.87)"><path d="M0.5,4.5 L4.5,1 L8.5,4.5 L4.5,8 Z" fill="#10a0f0" stroke="#d020f0" stroke-width="0.5"/><rect x="3.5" y="3" width="2" height="3" fill="#0030a0"/></g><g transform="translate(389.7,40.2) scale(0.87)"><path d="M0.5,6 L4.5,2 L8.5,6 L4.5,7.5 Z" fill="#10a0f0" stroke="#d020f0" stroke-width="0.5"/><rect x="2.5" y="5" width="4" height="1" fill="#0030a0"/></g><g transform="translate(400.2,40.2) scale(0.87)"><rect x="0.5" y="4" width="8.5" height="2.5" fill="#10a0f0" stroke="#d020f0" stroke-width="0.5"/><rect x="3" y="3" width="3" height="1" fill="#0030a0"/></g><g transform="translate(413.2,40.2) scale(0.87)"><rect x="0.5" y="4" width="8.5" height="2.5" fill="#10a0f0" stroke="#d020f0" stroke-width="0.5"/><rect x="3" y="3" width="3" height="1" fill="#0030a0"/></g><g transform="translate(424.2,40.2) scale(0.87)"><ellipse cx="4.5" cy="4.7" rx="4.3" ry="2.6" fill="#10a0f0" stroke="#d020f0" stroke-width="0.5"/><rect x="3.5" y="3.5" width="2" height="2.5" fill="#005080"/></g><g transform="translate(435.2,40.2) scale(0.87)"><ellipse cx="4.5" cy="4.7" rx="4.3" ry="2.2" fill="#10a0f0" stroke="#d020f0" stroke-width="0.5"/><rect x="1.5" y="4.2" width="6" height="1" fill="#30d060"/></g><g transform="translate(451.2,40.2) scale(0.87)"><path d="M1,4 L4.5,1 L8,4 V8.5 H1 Z" fill="#e020e0" stroke="#2020a0" stroke-width="0.9"/><rect x="5" y="0.5" width="2" height="3" fill="#c02020"/></g><g transform="translate(472.7,40.2) scale(0.87)"><path d="M1,1 L7.5,8" stroke="#111" stroke-width="2.4"/><path d="M1.5,1.5 L7,7.5" stroke="#20c0e0" stroke-width="1"/><path d="M5,0.5 h3 M6.5,0 V2" stroke="#333" stroke-width="0.6"/></g><g transform="translate(488.7,40.2) scale(0.87)"><circle cx="3.5" cy="3.5" r="2.9" fill="#f0f0f0" stroke="#111" stroke-width="1"/><path d="M5.5,5.5 L8.5,8.5" stroke="#108090" stroke-width="1.6"/><rect x="2" y="2" width="3" height="3" fill="#555"/></g><g transform="translate(500.2,40.2) scale(0.87)"><circle cx="3.5" cy="3.5" r="2.9" fill="#f0f0f0" stroke="#111" stroke-width="1"/><path d="M5.5,5.5 L8.5,8.5" stroke="#108090" stroke-width="1.6"/><path d="M2,3.5 H5 M3.5,2 V5" stroke="#111" stroke-width="0.8"/></g><g transform="translate(512.2,40.2) scale(0.87)"><circle cx="3.5" cy="3.5" r="2.9" fill="#f0f0f0" stroke="#111" stroke-width="1"/><path d="M5.5,5.5 L8.5,8.5" stroke="#108090" stroke-width="1.6"/><path d="M7,0.5 V4" stroke="#111" stroke-width="0.8" stroke-dasharray="1,0.6"/></g><g transform="translate(524.2,40.2) scale(0.87)"><circle cx="3.5" cy="3.5" r="2.9" fill="#f0f0f0" stroke="#111" stroke-width="1"/><path d="M5.5,5.5 L8.5,8.5" stroke="#108090" stroke-width="1.6"/><path d="M2,3.5 H5" stroke="#111" stroke-width="0.8"/></g><g transform="translate(533.7,40.2) scale(0.87)"><path d="M1.5,5 A3,3 0 0 1 7,2.5 M7.5,4 A3,3 0 0 1 2,6.5" fill="none" stroke="#111" stroke-width="1"/><path d="M6,1 L8,3 L5.5,3.3Z M3,8 L1,6 L3.5,5.7Z" fill="#111"/></g><g transform="translate(545.7,40.2) scale(0.87)"><path d="M4.5,0.5 V8.5 M0.5,4.5 H8.5" stroke="#111" stroke-width="1.2"/><path d="M4.5,0 L3,2 H6Z M4.5,9 L3,7 H6Z M0,4.5 L2,3 V6Z M9,4.5 L7,3 V6Z" fill="#111"/></g><g transform="translate(568.2,40.2) scale(0.87)"><rect x="0.5" y="0.5" width="5.5" height="5.5" fill="#f4f4f4" stroke="#111" stroke-width="0.9"/><rect x="3" y="3" width="5.5" height="5.5" fill="none" stroke="#111" stroke-width="0.9"/></g><g transform="translate(591.2,40.2) scale(0.87)"><path d="M0.5,2.5 L3,0.5 H9 V6 L6.5,8.5 H0.5 Z" fill="#10d0d8"/><path d="M0.5,2.5 H6.5 V8.5 M6.5,2.5 L9,0.5" fill="none" stroke="#108890" stroke-width="0.6"/></g><g transform="translate(602.2,40.2) scale(0.87)"><path d="M0.5,2 L2.5,0.5 H5 L4,2 Z" fill="#e02020"/><path d="M1.5,3 H7.5 V8.5 H1.5 Z" fill="#20d0d8" stroke="#333" stroke-width="0.8"/><rect x="3" y="4.5" width="3" height="2.5" fill="#7ef0f0"/></g><g transform="translate(613.2,40.2) scale(0.87)"><path d="M0.5,1.5 L4.5,0.5 L8.5,1.5 L7.5,6 L4.5,8.5 L1.5,6 Z" fill="#8a8a8a" stroke="#aaa" stroke-width="0.5"/></g><g transform="translate(624.2,40.2) scale(0.87)"><rect x="0.5" y="1.5" width="9" height="5.5" fill="#fff" stroke="#333" stroke-width="0.9"/><path d="M1,3.5 H9 M1,5.2 H9" stroke="#e02020" stroke-width="1"/><path d="M8,7 L9.5,8.5 H7 Z" fill="#111"/></g><rect x="578.5" y="39.5" width="10.5" height="9" rx="1.6" fill="#ececec" stroke="#6e6e6e" stroke-width="1"/><g transform="translate(579.7,40.3) scale(0.87)"><path d="M0.5,2.5 L2.5,0.5 H8 V6 L6,8 H0.5 Z" fill="#20d0d8" stroke="#333" stroke-width="0.6"/><rect x="3" y="3.5" width="4" height="4" fill="#7ef0f0" stroke="#106070" stroke-width="0.5"/></g></svg>
<div style="position:absolute;left:0px;top:51px;width:119px;height:463px;background:#f0f0f0;"></div>
<div style="position:absolute;left:2px;top:53px;width:108px;height:6.5px;background:linear-gradient(#dbe6f3,#c4d6ea);"></div>
<div class="t" style="left:3.00px;top:53.46px;font-size:5.49px;font-weight:normal;color:#3a4a5a;transform:scaleX(0.945) translateZ(0);-webkit-text-stroke:0.12px #3a4a5a;">Entities</div>
<svg width="5" height="5" viewBox="0 0 5 5" style="position:absolute;left:111.8px;top:53.5px"><path d="M1.1,1.1 L3.9,3.9 M3.9,1.1 L1.1,3.9" stroke="#222" stroke-width="0.8"/><rect x="1.8" y="1.8" width="1.4" height="1.4" fill="#000"/></svg>
<div style="position:absolute;left:2px;top:60px;width:115.5px;height:202px;background:#fff;border-left:1.5px solid #222;border-top:1px solid #666;border-right:1px solid #d0d0d0;border-bottom:1px solid #d8d8d8;box-sizing:border-box;"></div>
<div style="position:absolute;left:0px;top:264px;width:118px;height:1px;background:#c8c8c8;"></div>
<div style="position:absolute;left:3.5px;top:62px;width:112px;height:10px;background:#f0f0f0;"></div>
<div style="position:absolute;left:5px;top:62px;width:26px;height:10px;background:#fff;border:1px solid #999;border-bottom:none;box-sizing:border-box;"></div>
<div style="position:absolute;left:31px;top:64px;width:24px;height:8px;background:#f0f0f0;border:1px solid #999;border-bottom:none;box-sizing:border-box;"></div>
<div class="t" style="left:9.00px;top:64.52px;font-size:5.35px;font-weight:normal;color:#000;transform:scaleX(0.998) translateZ(0);-webkit-text-stroke:0.15px #000;">Parents</div>
<div class="t" style="left:33.00px;top:65.76px;font-size:5.49px;font-weight:normal;color:#000;transform:scaleX(0.979) translateZ(0);-webkit-text-stroke:0.15px #000;">Children</div>
<div class="t" style="left:27.00px;top:73.76px;font-size:6.31px;font-weight:normal;color:#000;transform:scaleX(0.809) translateZ(0);-webkit-text-stroke:0.2px #000;">Components</div>
<div class="t" style="left:27.00px;top:81.76px;font-size:6.31px;font-weight:normal;color:#000;transform:scaleX(0.809) translateZ(0);-webkit-text-stroke:0.2px #000;">Surfaces</div>
<div class="t" style="left:27.00px;top:89.76px;font-size:6.31px;font-weight:normal;color:#000;transform:scaleX(0.809) translateZ(0);-webkit-text-stroke:0.2px #000;">Curves</div>
<div class="t" style="left:27.00px;top:97.76px;font-size:6.31px;font-weight:normal;color:#000;transform:scaleX(0.809) translateZ(0);-webkit-text-stroke:0.2px #000;">Points</div>
<div class="t" style="left:27.00px;top:105.76px;font-size:6.31px;font-weight:normal;color:#000;transform:scaleX(0.809) translateZ(0);-webkit-text-stroke:0.2px #000;">Planes</div>
<div class="t" style="left:27.00px;top:113.76px;font-size:6.31px;font-weight:normal;color:#000;transform:scaleX(0.809) translateZ(0);-webkit-text-stroke:0.2px #000;">Frames</div>
<div class="t" style="left:27.00px;top:121.76px;font-size:6.31px;font-weight:normal;color:#000;transform:scaleX(0.809) translateZ(0);-webkit-text-stroke:0.2px #000;">Triangle Meshes</div>
<div class="t" style="left:27.00px;top:129.76px;font-size:6.31px;font-weight:normal;color:#000;transform:scaleX(0.809) translateZ(0);-webkit-text-stroke:0.2px #000;">Wireframes</div>
<div class="t" style="left:27.00px;top:137.76px;font-size:6.31px;font-weight:normal;color:#000;transform:scaleX(0.809) translateZ(0);-webkit-text-stroke:0.2px #000;">Contours</div>
<div class="t" style="left:27.00px;top:145.76px;font-size:6.31px;font-weight:normal;color:#000;transform:scaleX(0.809) translateZ(0);-webkit-text-stroke:0.2px #000;">Solids</div>
<div class="t" style="left:27.00px;top:153.76px;font-size:6.31px;font-weight:normal;color:#000;transform:scaleX(0.809) translateZ(0);-webkit-text-stroke:0.2px #000;">Composite Surfaces</div>
<div class="t" style="left:27.00px;top:161.76px;font-size:6.31px;font-weight:normal;color:#000;transform:scaleX(0.809) translateZ(0);-webkit-text-stroke:0.2px #000;">Relabels</div>
<div class="t" style="left:27.00px;top:169.76px;font-size:6.31px;font-weight:normal;color:#000;transform:scaleX(0.809) translateZ(0);-webkit-text-stroke:0.2px #000;">Graphs</div>
<div class="t" style="left:27.00px;top:177.76px;font-size:6.31px;font-weight:normal;color:#000;transform:scaleX(0.809) translateZ(0);-webkit-text-stroke:0.2px #000;">Knotlists</div>
<div class="t" style="left:27.00px;top:185.76px;font-size:6.31px;font-weight:normal;color:#000;transform:scaleX(0.809) translateZ(0);-webkit-text-stroke:0.2px #000;">Variables &amp; Formulas</div>
<div class="t" style="left:27.00px;top:193.76px;font-size:6.31px;font-weight:normal;color:#000;transform:scaleX(0.809) translateZ(0);-webkit-text-stroke:0.2px #000;">Text Labels</div>
<div class="t" style="left:27.00px;top:201.76px;font-size:6.31px;font-weight:normal;color:#000;transform:scaleX(0.809) translateZ(0);-webkit-text-stroke:0.2px #000;">Solve Sets</div>
<div class="t" style="left:27.00px;top:209.76px;font-size:6.31px;font-weight:normal;color:#000;transform:scaleX(0.809) translateZ(0);-webkit-text-stroke:0.2px #000;">Entity Lists</div>
<div class="t" style="left:27.00px;top:217.76px;font-size:6.31px;font-weight:normal;color:#000;transform:scaleX(0.809) translateZ(0);-webkit-text-stroke:0.2px #000;">System</div>
<div class="t" style="left:27.00px;top:225.76px;font-size:6.31px;font-weight:normal;color:#000;transform:scaleX(0.809) translateZ(0);-webkit-text-stroke:0.2px #000;">No Dependents</div>
<svg width="120" height="240" viewBox="0 0 120 240" style="position:absolute;left:0;top:0"><path d="M10.5,74 V212" stroke="#c0c0c0" stroke-width="0.8" stroke-dasharray="0.8,1.2"/><path d="M10.5,76.5 H15.5" stroke="#c0c0c0" stroke-width="0.7" stroke-dasharray="0.8,1"/><g transform="translate(16.3,72.3)"><path d="M0.5,4 H2" stroke="#111" stroke-width="1"/><path d="M1.5,4 L3,2 H5.5 V6 H3 Z" fill="#111"/><rect x="2.8" y="2.2" width="2.8" height="3.6" rx="1" fill="#f8f000"/><path d="M5.5,2.8 H8 M5.5,5.2 H8" stroke="#111" stroke-width="1.1"/></g><path d="M9.5,82.7 L11.8,84.5 L9.5,86.3 Z" fill="#fff" stroke="#8a8a8a" stroke-width="0.6"/><path d="M13,84.5 H15.5" stroke="#c0c0c0" stroke-width="0.7" stroke-dasharray="0.8,1"/><g transform="translate(16.3,80.3)"><path d="M0.5,1.5 L4.5,0.5 L8,2 L4.5,8 Z" fill="#f8f000" stroke="#111" stroke-width="1"/><path d="M2.5,2.5 L4.5,5 L6,2.5" fill="none" stroke="#776" stroke-width="0.6"/></g><path d="M9.5,90.7 L11.8,92.5 L9.5,94.3 Z" fill="#fff" stroke="#8a8a8a" stroke-width="0.6"/><path d="M13,92.5 H15.5" stroke="#c0c0c0" stroke-width="0.7" stroke-dasharray="0.8,1"/><g transform="translate(16.3,88.3)"><rect x="0.5" y="0.5" width="7.5" height="7.5" fill="#f8f070"/><path d="M0.8,7.5 L3,4 L4.2,5.5 L7.5,1" fill="none" stroke="#102050" stroke-width="1.1"/></g><path d="M9.5,98.7 L11.8,100.5 L9.5,102.3 Z" fill="#fff" stroke="#8a8a8a" stroke-width="0.6"/><path d="M13,100.5 H15.5" stroke="#c0c0c0" stroke-width="0.7" stroke-dasharray="0.8,1"/><g transform="translate(16.3,96.3)"><rect x="0.5" y="0.5" width="7.5" height="7.5" fill="#f8f070"/><path d="M1.5,1.5 L7,7 M7,1.5 L1.5,7" stroke="#111" stroke-width="1.1"/></g><path d="M9.5,106.7 L11.8,108.5 L9.5,110.3 Z" fill="#fff" stroke="#8a8a8a" stroke-width="0.6"/><path d="M13,108.5 H15.5" stroke="#c0c0c0" stroke-width="0.7" stroke-dasharray="0.8,1"/><g transform="translate(16.3,104.3)"><path d="M1,3.5 L4,1 L8,4.5 L5,7.5 Z" fill="#f8f070"/><path d="M0,0 L8.5,8.5" stroke="#333" stroke-width="0.9"/></g><path d="M10.5,116.5 H15.5" stroke="#c0c0c0" stroke-width="0.7" stroke-dasharray="0.8,1"/><g transform="translate(16.3,112.3)"><rect x="0.5" y="0.5" width="7.5" height="7.5" fill="#f8f070"/><path d="M1.8,1.5 V6.8 H7 M2,6.5 L6,3" fill="none" stroke="#111" stroke-width="1.1"/></g><path d="M10.5,124.5 H15.5" stroke="#c0c0c0" stroke-width="0.7" stroke-dasharray="0.8,1"/><g transform="translate(16.3,120.3)"><rect x="0.5" y="0.5" width="7.5" height="7.5" fill="#f8f000" stroke="#111" stroke-width="1.1"/><circle cx="4.2" cy="4.2" r="1.6" fill="#d8d880" stroke="#5060c0" stroke-width="0.5"/></g><path d="M10.5,132.5 H15.5" stroke="#c0c0c0" stroke-width="0.7" stroke-dasharray="0.8,1"/><g transform="translate(16.3,128.3)"><rect x="0.5" y="1" width="5.5" height="5" fill="#f8f000"/><path d="M4.5,7.5 L8,0.5" stroke="#e010e0" stroke-width="1.6"/><path d="M0.5,8 L4,6 M3,8 L7.5,1" stroke="#111" stroke-width="0.9"/></g><path d="M9.5,138.7 L11.8,140.5 L9.5,142.3 Z" fill="#fff" stroke="#8a8a8a" stroke-width="0.6"/><path d="M13,140.5 H15.5" stroke="#c0c0c0" stroke-width="0.7" stroke-dasharray="0.8,1"/><g transform="translate(16.3,136.3)"><rect x="0.5" y="0.5" width="7.5" height="7.5" rx="1" fill="#f8f000" stroke="#111" stroke-width="0.9"/><circle cx="4.5" cy="3.8" r="2.5" fill="#f09090"/><circle cx="4.5" cy="3.8" r="1.2" fill="#f8c0a0"/></g><path d="M10.5,148.5 H15.5" stroke="#c0c0c0" stroke-width="0.7" stroke-dasharray="0.8,1"/><g transform="translate(16.3,144.3)"><rect x="0.5" y="2.5" width="5.5" height="5.5" fill="#f8f000" stroke="#111" stroke-width="1"/><path d="M2,2.5 V0.8 H7.8 V6 H6" fill="none" stroke="#111" stroke-width="1"/></g><path d="M10.5,156.5 H15.5" stroke="#c0c0c0" stroke-width="0.7" stroke-dasharray="0.8,1"/><g transform="translate(16.3,152.3)"><path d="M0.8,0.8 L3.5,3 L1,5 M7.5,0.8 L5,3 L7.5,5 M1,7.5 L3.5,5.5 M7.5,7.5 L5,5.5" fill="none" stroke="#111" stroke-width="1.2"/><circle cx="2.2" cy="2.2" r="1.3" fill="#f8f000"/><circle cx="6.3" cy="2.2" r="1.3" fill="#f8f000"/><circle cx="2.2" cy="6.3" r="1.3" fill="#f8f000"/><circle cx="6.3" cy="6.3" r="1.3" fill="#f8f000"/></g><path d="M10.5,164.5 H15.5" stroke="#c0c0c0" stroke-width="0.7" stroke-dasharray="0.8,1"/><g transform="translate(16.3,160.3)"><rect x="0.5" y="1" width="7.5" height="7" fill="#f8f070"/><path d="M1,7.5 V3 Q1.5,1.2 3.5,1.2 H7.5" fill="none" stroke="#d02020" stroke-width="0.9" stroke-dasharray="1.2,0.7"/></g><path d="M10.5,172.5 H15.5" stroke="#c0c0c0" stroke-width="0.7" stroke-dasharray="0.8,1"/><g transform="translate(16.3,168.3)"><rect x="0.5" y="1.5" width="7.5" height="5.5" fill="#111"/><rect x="1.5" y="2.8" width="5.5" height="2.5" fill="#f0f060"/><path d="M2,4 H3 M4,3.5 V5 M5.5,4 H6.5" stroke="#111" stroke-width="0.6"/></g><path d="M10.5,180.5 H15.5" stroke="#c0c0c0" stroke-width="0.7" stroke-dasharray="0.8,1"/><g transform="translate(16.3,176.3)"><rect x="0.5" y="0.5" width="7.5" height="7.5" fill="#f8f070"/><path d="M1.5,7 L2.5,3" stroke="#111" stroke-width="0.9"/><circle cx="2" cy="7" r="0.9" fill="#4060b0"/><path d="M3.5,1 V2 M6,1 V2 M7,3 V4" stroke="#111" stroke-width="0.8"/></g><path d="M10.5,188.5 H15.5" stroke="#c0c0c0" stroke-width="0.7" stroke-dasharray="0.8,1"/><g transform="translate(16.3,184.3)"><rect x="0.5" y="0.5" width="7.5" height="7.5" fill="#f8f070"/><path d="M0.8,2.2 L3.8,5.8 M3.8,2.2 L0.8,5.8" stroke="#111" stroke-width="1"/><path d="M4.5,3.3 H7.5 M4.5,4.8 H7.5" stroke="#111" stroke-width="0.8"/></g><path d="M9.5,194.7 L11.8,196.5 L9.5,198.3 Z" fill="#fff" stroke="#8a8a8a" stroke-width="0.6"/><path d="M13,196.5 H15.5" stroke="#c0c0c0" stroke-width="0.7" stroke-dasharray="0.8,1"/><g transform="translate(16.3,192.3)"><rect x="0.5" y="0" width="7.5" height="8.5" fill="#f8f070"/><path d="M0.8,8 L4.2,0.5 L7.6,8 M2.3,5.2 H6.1" fill="none" stroke="#111" stroke-width="1.5"/></g><path d="M10.5,204.5 H15.5" stroke="#c0c0c0" stroke-width="0.7" stroke-dasharray="0.8,1"/><g transform="translate(16.3,200.3)"><rect x="0.5" y="0.5" width="7.5" height="7.5" fill="#f8f070"/><path d="M1,3 H7.5 M1,5.8 H7.5" stroke="#111" stroke-width="1.3"/></g><path d="M9.5,210.7 L11.8,212.5 L9.5,214.3 Z" fill="#fff" stroke="#8a8a8a" stroke-width="0.6"/><path d="M13,212.5 H15.5" stroke="#c0c0c0" stroke-width="0.7" stroke-dasharray="0.8,1"/><g transform="translate(16.3,208.3)"><rect x="0.5" y="0.5" width="7.5" height="7.5" fill="#707030" stroke="#e8e860" stroke-width="0.6"/><rect x="1.8" y="1.5" width="5" height="5" fill="#c8c890"/><path d="M2,5.5 H6.5" stroke="#f8f070" stroke-width="0.9"/></g><path d="M9.5,218.7 L11.8,220.5 L9.5,222.3 Z" fill="#fff" stroke="#8a8a8a" stroke-width="0.6"/><path d="M13,220.5 H15.5" stroke="#c0c0c0" stroke-width="0.7" stroke-dasharray="0.8,1"/><g transform="translate(16.3,216.3)"><path d="M4.3,0 V8.5 M0,4.3 H8.5 M1.2,1.2 L7.3,7.3 M7.3,1.2 L1.2,7.3" stroke="#f8f000" stroke-width="1.3"/><circle cx="4.3" cy="4.3" r="1.8" fill="#f8f000"/><circle cx="0.8" cy="6" r="0.8" fill="#102080"/><circle cx="7.6" cy="6" r="0.8" fill="#102080"/><circle cx="4.3" cy="8.4" r="0.7" fill="#102080"/></g><path d="M9.5,226.7 L11.8,228.5 L9.5,230.3 Z" fill="#fff" stroke="#8a8a8a" stroke-width="0.6"/><path d="M13,228.5 H15.5" stroke="#c0c0c0" stroke-width="0.7" stroke-dasharray="0.8,1"/><g transform="translate(16.3,224.3)"><path d="M1,1 L2.5,3 V6.5 L4,7.5 M2.5,6 L5.5,5 M2.5,3 L5.5,4.5" fill="none" stroke="#555" stroke-width="0.7"/><circle cx="1" cy="1" r="1" fill="#10a010"/><circle cx="3" cy="2.5" r="0.9" fill="#10a010"/><circle cx="4" cy="8" r="1" fill="#10a010"/><circle cx="5.5" cy="4.5" r="1" fill="#10a010"/><circle cx="5.5" cy="6" r="0.9" fill="#f01010"/><circle cx="7.8" cy="4" r="1" fill="#f01010"/></g></svg>
<div style="position:absolute;left:2px;top:266px;width:108px;height:6px;background:linear-gradient(#dbe6f3,#c4d6ea);"></div>
<div class="t" style="left:3.00px;top:265.99px;font-size:6.04px;font-weight:normal;color:#3a4a5a;transform:scaleX(0.887) translateZ(0);-webkit-text-stroke:0.12px #3a4a5a;">Properties</div>
<svg width="5" height="5" viewBox="0 0 5 5" style="position:absolute;left:111.8px;top:266.5px"><path d="M1.1,1.1 L3.9,3.9 M3.9,1.1 L1.1,3.9" stroke="#222" stroke-width="0.8"/><rect x="1.8" y="1.8" width="1.4" height="1.4" fill="#000"/></svg>
<div style="position:absolute;left:2px;top:273px;width:116px;height:136px;background:#f0f0f0;border-left:1.5px solid #222;border-top:1px solid #666;box-sizing:border-box;"></div>
<div style="position:absolute;left:3.5px;top:274px;width:113px;height:7.5px;background:#ececec;border-bottom:1px solid #9a9a9a;box-sizing:border-box;"></div>
<div class="t" style="left:3.00px;top:275.03px;font-size:6.58px;font-weight:bold;color:#000;transform:scaleX(1.025) translateZ(0);-webkit-text-stroke:0.2px #000;">Multiple</div>
<svg width="10" height="9" viewBox="0 0 10 9" style="position:absolute;left:107px;top:273.5px"><path d="M9,0.5 V8.3 H1" fill="none" stroke="#555" stroke-width="0.9"/><path d="M2.3,3 C2.3,0.8 7.3,0.8 7.3,3 C7.3,4.3 5.8,4.3 5.8,5.5 V6 H3.9 V5 C3.9,3.8 5.3,3.8 5.3,3 C5.3,2.3 4.3,2.3 4.3,3 Z" fill="#f0e000" stroke="#222" stroke-width="0.7"/><rect x="3.9" y="6.4" width="1.9" height="1.4" fill="#f0e000" stroke="#222" stroke-width="0.6"/></svg>
<div style="position:absolute;left:3.5px;top:281.5px;width:113px;height:80px;background:#fff;"></div>
<div style="position:absolute;left:3.5px;top:289px;width:113px;height:1px;background:#d8d8d8;"></div>
<div class="t" style="left:7.20px;top:282.09px;font-size:6.04px;font-weight:normal;color:#000;transform:scaleX(0.818) translateZ(0);-webkit-text-stroke:0.2px #000;">Color</div>
<div class="t" style="left:57.00px;top:282.09px;font-size:6.04px;font-weight:normal;color:#000;transform:scaleX(0.852) translateZ(0);-webkit-text-stroke:0.2px #000;">(various)</div>
<div style="position:absolute;left:3.5px;top:297px;width:113px;height:1px;background:#d8d8d8;"></div>
<div class="t" style="left:7.20px;top:290.09px;font-size:6.04px;font-weight:normal;color:#000;transform:scaleX(0.838) translateZ(0);-webkit-text-stroke:0.2px #000;">Visible</div>
<div class="t" style="left:64.80px;top:290.09px;font-size:6.04px;font-weight:normal;color:#000;transform:scaleX(0.919) translateZ(0);-webkit-text-stroke:0.2px #000;">True</div>
<div style="position:absolute;left:57px;top:289.1px;width:6px;height:6px;background:linear-gradient(135deg,#dcdcdc,#ffffff);border:1px solid #8f8f8f;box-sizing:border-box;"></div>
<svg width="6" height="6" viewBox="0 0 6 6" style="position:absolute;left:57px;top:289.1px"><path d="M1.2,3 L2.5,4.6 L5,1" fill="none" stroke="#1a3aa0" stroke-width="1.1"/></svg>
<div style="position:absolute;left:3.5px;top:305px;width:113px;height:1px;background:#d8d8d8;"></div>
<div class="t" style="left:7.20px;top:298.09px;font-size:6.04px;font-weight:normal;color:#000;transform:scaleX(0.848) translateZ(0);-webkit-text-stroke:0.2px #000;">Layer</div>
<div class="t" style="left:65.50px;top:298.09px;font-size:6.04px;font-weight:normal;color:#000;transform:scaleX(0.745) translateZ(0);-webkit-text-stroke:0.2px #000;">0</div>
<svg width="9" height="9" viewBox="0 0 9 9" style="position:absolute;left:56px;top:295.90000000000003px"><path d="M0.5,8.5 L2,5 M8.5,8.5 L7,5" stroke="#f8f080" stroke-width="0.8"/><circle cx="4.5" cy="3.8" r="3.2" fill="#f8f000" stroke="#333" stroke-width="0.8"/><rect x="3.2" y="6.5" width="2.6" height="2.3" fill="#222"/></svg>
<div style="position:absolute;left:3.5px;top:313px;width:113px;height:1px;background:#d8d8d8;"></div>
<div class="t" style="left:7.20px;top:306.09px;font-size:6.04px;font-weight:normal;color:#000;transform:scaleX(0.918) translateZ(0);-webkit-text-stroke:0.2px #000;">Lock</div>
<div class="t" style="left:64.80px;top:306.09px;font-size:6.04px;font-weight:normal;color:#000;transform:scaleX(0.827) translateZ(0);-webkit-text-stroke:0.2px #000;">False</div>
<div style="position:absolute;left:57px;top:305.1px;width:6px;height:6px;background:linear-gradient(135deg,#dcdcdc,#ffffff);border:1px solid #8f8f8f;box-sizing:border-box;"></div>
<div style="position:absolute;left:3.5px;top:321px;width:113px;height:1px;background:#d8d8d8;"></div>
<div class="t" style="left:7.20px;top:314.09px;font-size:6.04px;font-weight:normal;color:#000;transform:scaleX(0.861) translateZ(0);-webkit-text-stroke:0.2px #000;">Divisions</div>
<div class="t" style="left:57.00px;top:314.09px;font-size:6.04px;font-weight:normal;color:#000;transform:scaleX(0.894) translateZ(0);-webkit-text-stroke:0.2px #000;">8</div>
<div style="position:absolute;left:3.5px;top:329px;width:113px;height:1px;background:#d8d8d8;"></div>
<div class="t" style="left:7.20px;top:322.09px;font-size:6.04px;font-weight:normal;color:#000;transform:scaleX(0.868) translateZ(0);-webkit-text-stroke:0.2px #000;">Subdivisions</div>
<div class="t" style="left:57.00px;top:322.09px;font-size:6.04px;font-weight:normal;color:#000;transform:scaleX(0.894) translateZ(0);-webkit-text-stroke:0.2px #000;">4</div>
<div style="position:absolute;left:3.5px;top:337px;width:113px;height:1px;background:#d8d8d8;"></div>
<div class="t" style="left:7.20px;top:330.09px;font-size:6.04px;font-weight:normal;color:#000;transform:scaleX(0.885) translateZ(0);-webkit-text-stroke:0.2px #000;">Show tickmarks</div>
<div class="t" style="left:64.80px;top:330.09px;font-size:6.04px;font-weight:normal;color:#000;transform:scaleX(0.827) translateZ(0);-webkit-text-stroke:0.2px #000;">False</div>
<div style="position:absolute;left:57px;top:329.1px;width:6px;height:6px;background:linear-gradient(135deg,#dcdcdc,#ffffff);border:1px solid #8f8f8f;box-sizing:border-box;"></div>
<div style="position:absolute;left:3.5px;top:345px;width:113px;height:1px;background:#d8d8d8;"></div>
<div class="t" style="left:7.20px;top:338.09px;font-size:6.04px;font-weight:normal;color:#000;transform:scaleX(0.929) translateZ(0);-webkit-text-stroke:0.2px #000;">Weight/unit length</div>
<div class="t" style="left:57.00px;top:338.09px;font-size:6.04px;font-weight:normal;color:#000;transform:scaleX(0.894) translateZ(0);-webkit-text-stroke:0.2px #000;">0.0000</div>
<div style="position:absolute;left:3.5px;top:353px;width:113px;height:1px;background:#d8d8d8;"></div>
<div class="t" style="left:7.20px;top:346.09px;font-size:6.04px;font-weight:normal;color:#000;transform:scaleX(0.851) translateZ(0);-webkit-text-stroke:0.2px #000;">Symmetry exempt</div>
<div class="t" style="left:64.80px;top:346.09px;font-size:6.04px;font-weight:normal;color:#000;transform:scaleX(0.827) translateZ(0);-webkit-text-stroke:0.2px #000;">False</div>
<div style="position:absolute;left:57px;top:345.1px;width:6px;height:6px;background:linear-gradient(135deg,#dcdcdc,#ffffff);border:1px solid #8f8f8f;box-sizing:border-box;"></div>
<div style="position:absolute;left:3.5px;top:361px;width:113px;height:1px;background:#d8d8d8;"></div>
<div class="t" style="left:7.20px;top:354.09px;font-size:6.04px;font-weight:normal;color:#000;transform:scaleX(0.883) translateZ(0);-webkit-text-stroke:0.2px #000;">User data</div>
<div style="position:absolute;left:54px;top:281.5px;width:1px;height:80px;background:#a8a8a8;"></div>
<div style="position:absolute;left:3.5px;top:361px;width:113px;height:1px;background:#d8d8d8;"></div>
<div style="position:absolute;left:3.5px;top:408.6px;width:113.5px;height:0.8px;background:#dcdcdc;"></div>
<div style="position:absolute;left:116.4px;top:362px;width:0.8px;height:47px;background:#e4e4e4;"></div>
<div style="position:absolute;left:0px;top:411.3px;width:118px;height:1px;background:#c8c8c8;"></div>
<div style="position:absolute;left:2px;top:413.5px;width:108px;height:6px;background:linear-gradient(#dbe6f3,#c4d6ea);"></div>
<div class="t" style="left:3.00px;top:414.12px;font-size:5.76px;font-weight:normal;color:#3a4a5a;transform:scaleX(0.922) translateZ(0);-webkit-text-stroke:0.12px #3a4a5a;">Selection Set</div>
<svg width="5" height="5" viewBox="0 0 5 5" style="position:absolute;left:111.8px;top:414.0px"><path d="M1.1,1.1 L3.9,3.9 M3.9,1.1 L1.1,3.9" stroke="#222" stroke-width="0.8"/><rect x="1.8" y="1.8" width="1.4" height="1.4" fill="#000"/></svg>
<div style="position:absolute;left:2px;top:420px;width:116px;height:93px;background:#f0f0f0;border-left:1.5px solid #222;border-top:1px solid #666;box-sizing:border-box;"></div>
<svg width="70" height="12" viewBox="0 0 70 12" style="position:absolute;left:0;top:421px"><rect x="6.3" y="1.8" width="9.2" height="9" rx="1.3" fill="#e4e4e4" stroke="#555" stroke-width="0.9"/><rect x="8" y="3.3" width="5.5" height="6" fill="#fff" stroke="#222" stroke-width="0.7"/><path d="M9.8,3.3 V9.3 M11.5,3.3 V9.3" stroke="#222" stroke-width="0.6"/><rect x="18.5" y="1.8" width="8.6" height="9" fill="#f8f8f8" stroke="#c8c8c8" stroke-width="0.6" stroke-dasharray="0.8,0.8"/><path d="M22.8,9.5 V4 M20.8,6 L22.8,3.8 L24.8,6" fill="none" stroke="#111" stroke-width="1"/><rect x="30.2" y="1.8" width="8.6" height="9" fill="#f8f8f8" stroke="#c8c8c8" stroke-width="0.6" stroke-dasharray="0.8,0.8"/><path d="M34.5,3.5 V9 M32.5,6.8 L34.5,9.2 L36.5,6.8" fill="none" stroke="#111" stroke-width="1"/><rect x="42" y="1.8" width="8.6" height="9" fill="#f8f8f8" stroke="#c8c8c8" stroke-width="0.6" stroke-dasharray="0.8,0.8"/><path d="M43.5,3.5 L49,9 M49,3.5 L43.5,9" stroke="#e03030" stroke-width="0.9"/><rect x="54.3" y="1.8" width="8.2" height="9" fill="#f0f0f0" stroke="#666" stroke-width="0.9"/><rect x="54.8" y="2.3" width="7.2" height="2" fill="#3050c0"/><path d="M55.5,4 L61.5,10 M61.5,4 L55.5,10" stroke="#e03030" stroke-width="0.9"/></svg>
<div class="t" style="left:66.80px;top:425.39px;font-size:5.62px;font-weight:normal;color:#000;transform:scaleX(0.925) translateZ(0);-webkit-text-stroke:0.2px #000;">4 Entities</div>
<div style="position:absolute;left:3.5px;top:433px;width:113px;height:79px;background:#fff;border:1px solid #b8b8b8;border-right:1px solid #888;box-sizing:border-box;"></div>
<div style="position:absolute;left:4.5px;top:434px;width:111px;height:12px;background:linear-gradient(#ffffff,#eeeeee);border-bottom:1px solid #e0e0e0;box-sizing:border-box;"></div>
<div class="t" style="left:8.80px;top:437.69px;font-size:6.04px;font-weight:normal;color:#000;transform:scaleX(0.882) translateZ(0);-webkit-text-stroke:0.2px #000;">Name</div>
<div class="t" style="left:81.40px;top:437.69px;font-size:6.04px;font-weight:normal;color:#000;transform:scaleX(0.932) translateZ(0);-webkit-text-stroke:0.2px #000;">Type</div>
<div class="t" style="left:17.00px;top:448.29px;font-size:6.04px;font-weight:normal;color:#000;transform:scaleX(1.009) translateZ(0);-webkit-text-stroke:0.2px #000;">mc1</div>
<div class="t" style="left:80.70px;top:448.29px;font-size:6.04px;font-weight:normal;color:#000;transform:scaleX(0.879) translateZ(0);-webkit-text-stroke:0.2px #000;">B-spline S...</div>
<div class="t" style="left:17.00px;top:456.89px;font-size:6.04px;font-weight:normal;color:#000;transform:scaleX(1.052) translateZ(0);-webkit-text-stroke:0.2px #000;">mc2</div>
<div class="t" style="left:80.70px;top:456.89px;font-size:6.04px;font-weight:normal;color:#000;transform:scaleX(0.870) translateZ(0);-webkit-text-stroke:0.2px #000;">B-spline C...</div>
<div class="t" style="left:17.00px;top:465.49px;font-size:6.04px;font-weight:normal;color:#000;transform:scaleX(1.009) translateZ(0);-webkit-text-stroke:0.2px #000;">mc3</div>
<div class="t" style="left:80.70px;top:465.49px;font-size:6.04px;font-weight:normal;color:#000;transform:scaleX(0.870) translateZ(0);-webkit-text-stroke:0.2px #000;">B-spline C...</div>
<div class="t" style="left:17.00px;top:474.09px;font-size:6.04px;font-weight:normal;color:#000;transform:scaleX(0.906) translateZ(0);-webkit-text-stroke:0.2px #000;">mc3_proj</div>
<div class="t" style="left:80.70px;top:474.09px;font-size:6.04px;font-weight:normal;color:#000;transform:scaleX(0.888) translateZ(0);-webkit-text-stroke:0.2px #000;">Projected ...</div>
<div style="position:absolute;left:4.5px;top:504.5px;width:111px;height:7px;background:#f0f0f0;"></div>
<div style="position:absolute;left:15.5px;top:505px;width:50.5px;height:6.5px;background:linear-gradient(#fafafa,#dedede);border:1px solid #9a9a9a;border-radius:1.5px;box-sizing:border-box;"></div>
<svg width="120" height="10" viewBox="0 0 120 10" style="position:absolute;left:0;top:503px"><path d="M8.5,5.3 L10.5,3.8 V6.8 Z M112.5,5.3 L110.5,3.8 V6.8 Z" fill="#222"/><path d="M38.5,4.5 V7 M40,4.5 V7 M41.5,4.5 V7" stroke="#777" stroke-width="0.6"/></svg>
<div style="position:absolute;left:0px;top:512px;width:119px;height:1px;background:#e8e8e8;"></div>
<div style="position:absolute;left:117.2px;top:51px;width:1.8px;height:462px;background:#fbfbfb;"></div>
<div style="position:absolute;left:119px;top:51px;width:1.2px;height:462px;background:#8a8a60;"></div>
<div style="position:absolute;left:120.2px;top:52px;width:1px;height:461px;background:#7474f4;"></div>
<div style="position:absolute;left:119px;top:51px;width:580px;height:1px;background:#707050;"></div>
<div style="position:absolute;left:120px;top:52px;width:578px;height:461px;background:#8080ff;"></div>
<div style="position:absolute;left:120px;top:512.6px;width:578px;height:0.8px;background:#6a6ae8;"></div>
<div style="position:absolute;left:696.6px;top:52px;width:2px;height:461px;background:#7070f6;"></div>
<div style="position:absolute;left:698.6px;top:51px;width:1.4px;height:462px;background:#dfe4f0;"></div>
<div style="position:absolute;left:0px;top:513px;width:700px;height:1px;background:#d4d2c6;"></div>
<div style="position:absolute;left:0px;top:514px;width:700px;height:1px;background:#fcfcfc;"></div>
<div style="position:absolute;left:0px;top:515px;width:700px;height:8.5px;background:#ece9e5;"></div>
<div style="position:absolute;left:0px;top:523.5px;width:700px;height:1.5px;background:#8a8a8a;"></div>
<div style="position:absolute;left:439px;top:515px;width:0.8px;height:8.5px;background:#c8c4bc;"></div>
<div style="position:absolute;left:495.7px;top:515px;width:0.8px;height:8.5px;background:#c8c4bc;"></div>
<div style="position:absolute;left:539.7px;top:515px;width:0.8px;height:8.5px;background:#c8c4bc;"></div>
<div style="position:absolute;left:584px;top:515px;width:0.8px;height:8.5px;background:#c8c4bc;"></div>
<div style="position:absolute;left:647.5px;top:515px;width:0.8px;height:8.5px;background:#c8c4bc;"></div>
<div class="t" style="left:2.00px;top:518.12px;font-size:6.17px;font-weight:normal;color:#000;transform:scaleX(0.890) translateZ(0);-webkit-text-stroke:0.2px #000;">For Help, press F1.</div>
<div class="t" style="left:281.90px;top:517.22px;font-size:6.17px;font-weight:normal;color:#000;transform:scaleX(0.839) translateZ(0);-webkit-text-stroke:0.2px #000;">L:0</div>
<div class="t" style="left:498.00px;top:517.22px;font-size:6.17px;font-weight:normal;color:#000;transform:scaleX(0.901) translateZ(0);-webkit-text-stroke:0.2px #000;">Lat 6.5</div>
<div class="t" style="left:542.00px;top:517.22px;font-size:6.17px;font-weight:normal;color:#000;transform:scaleX(0.916) translateZ(0);-webkit-text-stroke:0.2px #000;">Lon 21.5</div>
<div class="t" style="left:585.80px;top:517.22px;font-size:6.17px;font-weight:normal;color:#000;transform:scaleX(0.902) translateZ(0);-webkit-text-stroke:0.2px #000;">Radius 5.56</div>
<div class="t" style="left:650.30px;top:517.22px;font-size:6.17px;font-weight:normal;color:#000;transform:scaleX(0.896) translateZ(0);-webkit-text-stroke:0.2px #000;">Tilt 0.0</div>
<svg width="700" height="525" viewBox="0 0 700 525" style="position:absolute;left:0;top:0">
<defs>
<clipPath id="vp"><rect x="120" y="51" width="577.5" height="462"/></clipPath>
<clipPath id="pl"><path d="M120,234.3 L209.3,227.3 L564.4,306.6 L697.5,340.6 L697.5,350.5 L697.50,350.50 L692.56,350.60 L687.67,350.30 L682.79,350.00 L677.90,349.69 L673.02,349.38 L668.13,349.08 L663.25,348.77 L658.36,348.46 L653.47,348.15 L648.58,347.83 L643.69,347.52 L638.81,347.20 L633.92,346.88 L629.03,346.56 L624.14,346.24 L619.25,345.91 L614.36,345.58 L609.46,345.25 L604.57,344.92 L599.68,344.58 L594.79,344.24 L589.90,343.90 L585.01,343.55 L580.12,343.20 L575.23,342.85 L570.33,342.49 L565.44,342.13 L560.55,341.76 L555.66,341.40 L550.77,341.02 L545.88,340.65 L540.99,340.26 L536.10,339.88 L531.21,339.49 L526.32,339.09 L521.43,338.69 L516.54,338.29 L511.65,337.87 L506.76,337.46 L501.87,337.04 L496.98,336.61 L492.10,336.18 L487.21,335.74 L482.32,335.30 L477.44,334.85 L472.55,334.39 L467.67,333.93 L462.79,333.46 L457.91,332.98 L453.02,332.50 L448.14,332.01 L443.26,331.52 L438.38,331.02 L433.51,330.51 L428.63,329.99 L423.75,329.47 L418.88,328.94 L414.00,328.40 L409.13,327.85 L404.26,327.30 L399.39,326.73 L394.52,326.16 L389.65,325.59 L384.78,325.00 L379.91,324.40 L375.05,323.80 L370.18,323.19 L365.32,322.57 L360.46,321.94 L355.60,321.30 L350.74,320.65 L345.89,319.99 L341.03,319.32 L336.18,318.65 L331.33,317.96 L326.48,317.26 L321.63,316.56 L316.78,315.84 L311.94,315.12 L307.09,314.38 L302.25,313.63 L297.41,312.87 L292.57,312.11 L287.73,311.33 L282.90,310.54 L278.07,309.74 L273.24,308.93 L268.41,308.10 L263.58,307.27 L258.76,306.42 L253.93,305.56 L249.11,304.70 L244.30,303.81 L239.48,302.92 L234.67,302.02 L229.85,301.10 L225.04,300.17 L220.24,299.23 L215.43,298.27 L210.63,297.30 L205.83,296.32 L201.03,295.33 L196.24,294.32 L191.44,293.30 L186.65,292.27 L181.87,291.22 L177.08,290.16 L172.30,289.09 L167.52,288.00 L162.74,286.90 L157.97,285.79 L153.20,284.66 L148.43,283.51 L143.66,282.35 L138.90,281.18 L134.14,279.99 L129.38,278.79 L124.62,277.57 L120.00,275.90 Z"/></clipPath>
<linearGradient id="dg" x1="196" y1="198" x2="565" y2="307" gradientUnits="userSpaceOnUse">
<stop offset="0" stop-color="#34588a"/><stop offset="0.55" stop-color="#355d8e"/><stop offset="1" stop-color="#3a7ca4"/></linearGradient>
<linearGradient id="dg2" x1="196" y1="0" x2="565" y2="0" gradientUnits="userSpaceOnUse">
<stop offset="0" stop-color="#384660"/><stop offset="0.7" stop-color="#394a60"/><stop offset="1" stop-color="#3a5868"/></linearGradient>
</defs>
<g clip-path="url(#vp)">
<path d="M120,234.3 L209.3,227.3 L564.4,306.6 L697.5,340.6 L697.5,350.5 L697.50,350.50 L692.56,350.60 L687.67,350.30 L682.79,350.00 L677.90,349.69 L673.02,349.38 L668.13,349.08 L663.25,348.77 L658.36,348.46 L653.47,348.15 L648.58,347.83 L643.69,347.52 L638.81,347.20 L633.92,346.88 L629.03,346.56 L624.14,346.24 L619.25,345.91 L614.36,345.58 L609.46,345.25 L604.57,344.92 L599.68,344.58 L594.79,344.24 L589.90,343.90 L585.01,343.55 L580.12,343.20 L575.23,342.85 L570.33,342.49 L565.44,342.13 L560.55,341.76 L555.66,341.40 L550.77,341.02 L545.88,340.65 L540.99,340.26 L536.10,339.88 L531.21,339.49 L526.32,339.09 L521.43,338.69 L516.54,338.29 L511.65,337.87 L506.76,337.46 L501.87,337.04 L496.98,336.61 L492.10,336.18 L487.21,335.74 L482.32,335.30 L477.44,334.85 L472.55,334.39 L467.67,333.93 L462.79,333.46 L457.91,332.98 L453.02,332.50 L448.14,332.01 L443.26,331.52 L438.38,331.02 L433.51,330.51 L428.63,329.99 L423.75,329.47 L418.88,328.94 L414.00,328.40 L409.13,327.85 L404.26,327.30 L399.39,326.73 L394.52,326.16 L389.65,325.59 L384.78,325.00 L379.91,324.40 L375.05,323.80 L370.18,323.19 L365.32,322.57 L360.46,321.94 L355.60,321.30 L350.74,320.65 L345.89,319.99 L341.03,319.32 L336.18,318.65 L331.33,317.96 L326.48,317.26 L321.63,316.56 L316.78,315.84 L311.94,315.12 L307.09,314.38 L302.25,313.63 L297.41,312.87 L292.57,312.11 L287.73,311.33 L282.90,310.54 L278.07,309.74 L273.24,308.93 L268.41,308.10 L263.58,307.27 L258.76,306.42 L253.93,305.56 L249.11,304.70 L244.30,303.81 L239.48,302.92 L234.67,302.02 L229.85,301.10 L225.04,300.17 L220.24,299.23 L215.43,298.27 L210.63,297.30 L205.83,296.32 L201.03,295.33 L196.24,294.32 L191.44,293.30 L186.65,292.27 L181.87,291.22 L177.08,290.16 L172.30,289.09 L167.52,288.00 L162.74,286.90 L157.97,285.79 L153.20,284.66 L148.43,283.51 L143.66,282.35 L138.90,281.18 L134.14,279.99 L129.38,278.79 L124.62,277.57 L120.00,275.90 Z" fill="#585887"/>
<path d="M120.00,275.90 L124.62,277.57 L129.38,278.79 L134.14,279.99 L138.90,281.18 L143.66,282.35 L148.43,283.51 L153.20,284.66 L157.97,285.79 L162.74,286.90 L167.52,288.00 L172.30,289.09 L177.08,290.16 L181.87,291.22 L186.65,292.27 L191.44,293.30 L196.24,294.32 L201.03,295.33 L205.83,296.32 L210.63,297.30 L215.43,298.27 L220.24,299.23 L225.04,300.17 L229.85,301.10 L234.67,302.02 L239.48,302.92 L244.30,303.81 L249.11,304.70 L253.93,305.56 L258.76,306.42 L263.58,307.27 L268.41,308.10 L273.24,308.93 L278.07,309.74 L282.90,310.54 L287.73,311.33 L292.57,312.11 L297.41,312.87 L302.25,313.63 L307.09,314.38 L311.94,315.12 L316.78,315.84 L321.63,316.56 L326.48,317.26 L331.33,317.96 L336.18,318.65 L341.03,319.32 L345.89,319.99 L350.74,320.65 L355.60,321.30 L360.46,321.94 L365.32,322.57 L370.18,323.19 L375.05,323.80 L379.91,324.40 L384.78,325.00 L389.65,325.59 L394.52,326.16 L399.39,326.73 L404.26,327.30 L409.13,327.85 L414.00,328.40 L418.88,328.94 L423.75,329.47 L428.63,329.99 L433.51,330.51 L438.38,331.02 L443.26,331.52 L448.14,332.01 L453.02,332.50 L457.91,332.98 L462.79,333.46 L467.67,333.93 L472.55,334.39 L477.44,334.85 L482.32,335.30 L487.21,335.74 L492.10,336.18 L496.98,336.61 L501.87,337.04 L506.76,337.46 L511.65,337.87 L516.54,338.29 L521.43,338.69 L526.32,339.09 L531.21,339.49 L536.10,339.88 L540.99,340.26 L545.88,340.65 L550.77,341.02 L555.66,341.40 L560.55,341.76 L565.44,342.13 L570.33,342.49 L575.23,342.85 L580.12,343.20 L585.01,343.55 L589.90,343.90 L594.79,344.24 L599.68,344.58 L604.57,344.92 L609.46,345.25 L614.36,345.58 L619.25,345.91 L624.14,346.24 L629.03,346.56 L633.92,346.88 L638.81,347.20 L643.69,347.52 L648.58,347.83 L653.47,348.15 L658.36,348.46 L663.25,348.77 L668.13,349.08 L673.02,349.38 L677.90,349.69 L682.79,350.00 L687.67,350.30 L692.56,350.60 L697.50,350.50" fill="none" stroke="#a0a0ac" stroke-width="0.9"/>
<path d="M120,234.3 L209.3,227.3" fill="none" stroke="#a0a0ac" stroke-width="0.9"/>
<path d="M196.40,278.20 L198.48,275.72 L200.35,272.91 L202.25,270.12 L204.19,267.35 L206.16,264.61 L208.18,261.90 L210.23,259.22 L212.32,256.57 L214.45,253.96 L216.62,251.39 L218.83,248.86 L221.08,246.38 L223.38,243.94 L225.71,241.56 L228.08,239.22 L230.50,236.95 L232.96,234.72 L235.46,232.56 L238.00,230.47 L240.59,228.43 L243.22,226.47 L245.90,224.58 L248.62,222.76 L251.39,221.01 L254.20,219.34 L257.06,217.76 L259.97,216.26 L262.92,214.84 L265.91,213.49 L268.95,212.23 L272.02,211.04 L275.12,209.92 L278.26,208.87 L281.43,207.88 L284.63,206.96 L287.86,206.11 L291.11,205.31 L294.39,204.57 L297.68,203.88 L300.99,203.25 L304.32,202.66 L307.66,202.12 L311.01,201.63 L314.37,201.18 L317.74,200.77 L321.11,200.39 L324.48,200.05 L327.85,199.75 L331.22,199.47 L334.59,199.22 L337.95,199.00 L341.30,198.80 L344.64,198.62 L347.96,198.45 L351.27,198.31 L354.56,198.17 L357.84,198.05 L361.08,197.93 L364.30,197.70 L364.30,197.70 L367.08,198.56 L369.83,199.38 L372.58,200.21 L375.34,201.03 L378.11,201.86 L380.89,202.68 L383.68,203.52 L386.47,204.35 L389.27,205.19 L392.07,206.03 L394.88,206.88 L397.69,207.74 L400.51,208.60 L403.33,209.47 L406.15,210.34 L408.97,211.23 L411.80,212.12 L414.62,213.02 L417.45,213.93 L420.27,214.85 L423.09,215.78 L425.92,216.72 L428.74,217.67 L431.55,218.64 L434.37,219.62 L437.17,220.61 L439.98,221.62 L442.78,222.64 L445.57,223.67 L448.36,224.72 L451.14,225.79 L453.91,226.87 L456.68,227.98 L459.43,229.09 L462.18,230.23 L464.91,231.39 L467.64,232.56 L470.35,233.75 L473.05,234.97 L475.75,236.21 L478.42,237.46 L481.09,238.74 L483.74,240.05 L486.37,241.37 L488.99,242.72 L491.59,244.09 L494.18,245.49 L496.75,246.91 L499.31,248.36 L501.84,249.84 L504.36,251.34 L506.85,252.87 L509.33,254.43 L511.78,256.02 L514.22,257.63 L516.63,259.28 L519.02,260.95 L521.39,262.66 L523.73,264.40 L526.05,266.17 L528.35,267.97 L530.62,269.81 L532.86,271.67 L535.08,273.58 L537.27,275.51 L539.44,277.49 L541.57,279.49 L543.68,281.54 L545.75,283.62 L547.80,285.74 L549.81,287.89 L551.80,290.09 L553.75,292.32 L555.67,294.59 L557.56,296.91 L559.41,299.26 L561.23,301.66 L563.02,304.09 L564.40,306.60 L564.40,306.60 L560.22,306.12 L556.06,306.59 L551.91,307.04 L547.75,307.47 L543.59,307.90 L539.43,308.31 L535.27,308.70 L531.10,309.08 L526.94,309.45 L522.78,309.80 L518.61,310.14 L514.45,310.45 L510.28,310.76 L506.12,311.04 L501.95,311.31 L497.79,311.57 L493.62,311.80 L489.45,312.02 L485.28,312.22 L481.12,312.40 L476.95,312.56 L472.78,312.70 L468.61,312.83 L464.45,312.93 L460.28,313.01 L456.11,313.08 L451.94,313.12 L447.78,313.14 L443.61,313.14 L439.45,313.12 L435.28,313.08 L431.12,313.02 L426.95,312.93 L422.79,312.82 L418.62,312.69 L414.46,312.53 L410.30,312.36 L406.14,312.16 L401.98,311.93 L397.82,311.69 L393.67,311.43 L389.51,311.14 L385.35,310.83 L381.20,310.50 L377.05,310.15 L372.90,309.79 L368.75,309.40 L364.60,308.99 L360.45,308.56 L356.31,308.11 L352.16,307.64 L348.02,307.16 L343.88,306.65 L339.74,306.13 L335.60,305.59 L331.47,305.03 L327.34,304.45 L323.20,303.86 L319.07,303.25 L314.95,302.62 L310.82,301.97 L306.70,301.31 L302.58,300.63 L298.46,299.93 L294.35,299.22 L290.23,298.50 L286.12,297.75 L282.01,297.00 L277.91,296.22 L273.80,295.44 L269.70,294.64 L265.61,293.82 L261.51,292.99 L257.42,292.15 L253.33,291.29 L249.24,290.42 L245.16,289.53 L241.08,288.64 L237.00,287.73 L232.93,286.81 L228.86,285.87 L224.79,284.93 L220.73,283.97 L216.67,283.00 L212.61,282.02 L208.56,281.03 L204.51,280.03 L200.46,279.02 L196.40,278.20 Z" fill="url(#dg)"/>
<path d="M196.40,278.20 L198.48,275.72 L200.35,272.91 L202.25,270.12 L204.19,267.35 L206.16,264.61 L208.18,261.90 L210.23,259.22 L212.32,256.57 L214.45,253.96 L216.62,251.39 L218.83,248.86 L221.08,246.38 L223.38,243.94 L225.71,241.56 L228.08,239.22 L230.50,236.95 L232.96,234.72 L235.46,232.56 L238.00,230.47 L240.59,228.43 L243.22,226.47 L245.90,224.58 L248.62,222.76 L251.39,221.01 L254.20,219.34 L257.06,217.76 L259.97,216.26 L262.92,214.84 L265.91,213.49 L268.95,212.23 L272.02,211.04 L275.12,209.92 L278.26,208.87 L281.43,207.88 L284.63,206.96 L287.86,206.11 L291.11,205.31 L294.39,204.57 L297.68,203.88 L300.99,203.25 L304.32,202.66 L307.66,202.12 L311.01,201.63 L314.37,201.18 L317.74,200.77 L321.11,200.39 L324.48,200.05 L327.85,199.75 L331.22,199.47 L334.59,199.22 L337.95,199.00 L341.30,198.80 L344.64,198.62 L347.96,198.45 L351.27,198.31 L354.56,198.17 L357.84,198.05 L361.08,197.93 L364.30,197.70 L364.30,197.70 L367.08,198.56 L369.83,199.38 L372.58,200.21 L375.34,201.03 L378.11,201.86 L380.89,202.68 L383.68,203.52 L386.47,204.35 L389.27,205.19 L392.07,206.03 L394.88,206.88 L397.69,207.74 L400.51,208.60 L403.33,209.47 L406.15,210.34 L408.97,211.23 L411.80,212.12 L414.62,213.02 L417.45,213.93 L420.27,214.85 L423.09,215.78 L425.92,216.72 L428.74,217.67 L431.55,218.64 L434.37,219.62 L437.17,220.61 L439.98,221.62 L442.78,222.64 L445.57,223.67 L448.36,224.72 L451.14,225.79 L453.91,226.87 L456.68,227.98 L459.43,229.09 L462.18,230.23 L464.91,231.39 L467.64,232.56 L470.35,233.75 L473.05,234.97 L475.75,236.21 L478.42,237.46 L481.09,238.74 L483.74,240.05 L486.37,241.37 L488.99,242.72 L491.59,244.09 L494.18,245.49 L496.75,246.91 L499.31,248.36 L501.84,249.84 L504.36,251.34 L506.85,252.87 L509.33,254.43 L511.78,256.02 L514.22,257.63 L516.63,259.28 L519.02,260.95 L521.39,262.66 L523.73,264.40 L526.05,266.17 L528.35,267.97 L530.62,269.81 L532.86,271.67 L535.08,273.58 L537.27,275.51 L539.44,277.49 L541.57,279.49 L543.68,281.54 L545.75,283.62 L547.80,285.74 L549.81,287.89 L551.80,290.09 L553.75,292.32 L555.67,294.59 L557.56,296.91 L559.41,299.26 L561.23,301.66 L563.02,304.09 L564.40,306.60 L564.40,306.60 L560.22,306.12 L556.06,306.59 L551.91,307.04 L547.75,307.47 L543.59,307.90 L539.43,308.31 L535.27,308.70 L531.10,309.08 L526.94,309.45 L522.78,309.80 L518.61,310.14 L514.45,310.45 L510.28,310.76 L506.12,311.04 L501.95,311.31 L497.79,311.57 L493.62,311.80 L489.45,312.02 L485.28,312.22 L481.12,312.40 L476.95,312.56 L472.78,312.70 L468.61,312.83 L464.45,312.93 L460.28,313.01 L456.11,313.08 L451.94,313.12 L447.78,313.14 L443.61,313.14 L439.45,313.12 L435.28,313.08 L431.12,313.02 L426.95,312.93 L422.79,312.82 L418.62,312.69 L414.46,312.53 L410.30,312.36 L406.14,312.16 L401.98,311.93 L397.82,311.69 L393.67,311.43 L389.51,311.14 L385.35,310.83 L381.20,310.50 L377.05,310.15 L372.90,309.79 L368.75,309.40 L364.60,308.99 L360.45,308.56 L356.31,308.11 L352.16,307.64 L348.02,307.16 L343.88,306.65 L339.74,306.13 L335.60,305.59 L331.47,305.03 L327.34,304.45 L323.20,303.86 L319.07,303.25 L314.95,302.62 L310.82,301.97 L306.70,301.31 L302.58,300.63 L298.46,299.93 L294.35,299.22 L290.23,298.50 L286.12,297.75 L282.01,297.00 L277.91,296.22 L273.80,295.44 L269.70,294.64 L265.61,293.82 L261.51,292.99 L257.42,292.15 L253.33,291.29 L249.24,290.42 L245.16,289.53 L241.08,288.64 L237.00,287.73 L232.93,286.81 L228.86,285.87 L224.79,284.93 L220.73,283.97 L216.67,283.00 L212.61,282.02 L208.56,281.03 L204.51,280.03 L200.46,279.02 L196.40,278.20 Z" fill="url(#dg2)" clip-path="url(#pl)"/>
<path d="M196.40,278.20 L198.48,275.72 L200.35,272.91 L202.25,270.12 L204.19,267.35 L206.16,264.61 L208.18,261.90 L210.23,259.22 L212.32,256.57 L214.45,253.96 L216.62,251.39 L218.83,248.86 L221.08,246.38 L223.38,243.94 L225.71,241.56 L228.08,239.22 L230.50,236.95 L232.96,234.72 L235.46,232.56 L238.00,230.47 L240.59,228.43 L243.22,226.47 L245.90,224.58 L248.62,222.76 L251.39,221.01 L254.20,219.34 L257.06,217.76 L259.97,216.26 L262.92,214.84 L265.91,213.49 L268.95,212.23 L272.02,211.04 L275.12,209.92 L278.26,208.87 L281.43,207.88 L284.63,206.96 L287.86,206.11 L291.11,205.31 L294.39,204.57 L297.68,203.88 L300.99,203.25 L304.32,202.66 L307.66,202.12 L311.01,201.63 L314.37,201.18 L317.74,200.77 L321.11,200.39 L324.48,200.05 L327.85,199.75 L331.22,199.47 L334.59,199.22 L337.95,199.00 L341.30,198.80 L344.64,198.62 L347.96,198.45 L351.27,198.31 L354.56,198.17 L357.84,198.05 L361.08,197.93 L364.30,197.70" fill="none" stroke="#1f7080" stroke-width="0.9"/>
<path d="M364.30,197.70 L367.08,198.56 L369.83,199.38 L372.58,200.21 L375.34,201.03 L378.11,201.86 L380.89,202.68 L383.68,203.52 L386.47,204.35 L389.27,205.19 L392.07,206.03 L394.88,206.88 L397.69,207.74 L400.51,208.60 L403.33,209.47 L406.15,210.34 L408.97,211.23 L411.80,212.12 L414.62,213.02 L417.45,213.93 L420.27,214.85 L423.09,215.78 L425.92,216.72 L428.74,217.67 L431.55,218.64 L434.37,219.62 L437.17,220.61 L439.98,221.62 L442.78,222.64 L445.57,223.67 L448.36,224.72 L451.14,225.79 L453.91,226.87 L456.68,227.98 L459.43,229.09 L462.18,230.23 L464.91,231.39 L467.64,232.56 L470.35,233.75 L473.05,234.97 L475.75,236.21 L478.42,237.46 L481.09,238.74 L483.74,240.05 L486.37,241.37 L488.99,242.72 L491.59,244.09 L494.18,245.49 L496.75,246.91 L499.31,248.36 L501.84,249.84 L504.36,251.34 L506.85,252.87 L509.33,254.43 L511.78,256.02 L514.22,257.63 L516.63,259.28 L519.02,260.95 L521.39,262.66 L523.73,264.40 L526.05,266.17 L528.35,267.97 L530.62,269.81 L532.86,271.67 L535.08,273.58 L537.27,275.51 L539.44,277.49 L541.57,279.49 L543.68,281.54 L545.75,283.62 L547.80,285.74 L549.81,287.89 L551.80,290.09 L553.75,292.32 L555.67,294.59 L557.56,296.91 L559.41,299.26 L561.23,301.66 L563.02,304.09 L564.40,306.60" fill="none" stroke="#1a3a88" stroke-width="1.3" transform="translate(-0.9,0.9)"/>
<path d="M364.30,197.70 L367.08,198.56 L369.83,199.38 L372.58,200.21 L375.34,201.03 L378.11,201.86 L380.89,202.68 L383.68,203.52 L386.47,204.35 L389.27,205.19 L392.07,206.03 L394.88,206.88 L397.69,207.74 L400.51,208.60 L403.33,209.47 L406.15,210.34 L408.97,211.23 L411.80,212.12 L414.62,213.02 L417.45,213.93 L420.27,214.85 L423.09,215.78 L425.92,216.72 L428.74,217.67 L431.55,218.64 L434.37,219.62 L437.17,220.61 L439.98,221.62 L442.78,222.64 L445.57,223.67 L448.36,224.72 L451.14,225.79 L453.91,226.87 L456.68,227.98 L459.43,229.09 L462.18,230.23 L464.91,231.39 L467.64,232.56 L470.35,233.75 L473.05,234.97 L475.75,236.21 L478.42,237.46 L481.09,238.74 L483.74,240.05 L486.37,241.37 L488.99,242.72 L491.59,244.09 L494.18,245.49 L496.75,246.91 L499.31,248.36 L501.84,249.84 L504.36,251.34 L506.85,252.87 L509.33,254.43 L511.78,256.02 L514.22,257.63 L516.63,259.28 L519.02,260.95 L521.39,262.66 L523.73,264.40 L526.05,266.17 L528.35,267.97 L530.62,269.81 L532.86,271.67 L535.08,273.58 L537.27,275.51 L539.44,277.49 L541.57,279.49 L543.68,281.54 L545.75,283.62 L547.80,285.74 L549.81,287.89 L551.80,290.09 L553.75,292.32 L555.67,294.59 L557.56,296.91 L559.41,299.26 L561.23,301.66 L563.02,304.09 L564.40,306.60" fill="none" stroke="#e0d090" stroke-width="1.15"/>
<path d="M209.3,227.3 L564.4,306.6 L697.5,340.6" fill="none" stroke="#d850e0" stroke-width="1.0"/>
<path d="M196.40,278.20 L200.46,279.02 L204.51,280.03 L208.56,281.03 L212.61,282.02 L216.67,283.00 L220.73,283.97 L224.79,284.93 L228.86,285.87 L232.93,286.81 L237.00,287.73 L241.08,288.64 L245.16,289.53 L249.24,290.42 L253.33,291.29 L257.42,292.15 L261.51,292.99 L265.61,293.82 L269.70,294.64 L273.80,295.44 L277.91,296.22 L282.01,297.00 L286.12,297.75 L290.23,298.50 L294.35,299.22 L298.46,299.93 L302.58,300.63 L306.70,301.31 L310.82,301.97 L314.95,302.62 L319.07,303.25 L323.20,303.86 L327.34,304.45 L331.47,305.03 L335.60,305.59 L339.74,306.13 L343.88,306.65 L348.02,307.16 L352.16,307.64 L356.31,308.11 L360.45,308.56 L364.60,308.99 L368.75,309.40 L372.90,309.79 L377.05,310.15 L381.20,310.50 L385.35,310.83 L389.51,311.14 L393.67,311.43 L397.82,311.69 L401.98,311.93 L406.14,312.16 L410.30,312.36 L414.46,312.53 L418.62,312.69 L422.79,312.82 L426.95,312.93 L431.12,313.02 L435.28,313.08 L439.45,313.12 L443.61,313.14 L447.78,313.14 L451.94,313.12 L456.11,313.08 L460.28,313.01 L464.45,312.93 L468.61,312.83 L472.78,312.70 L476.95,312.56 L481.12,312.40 L485.28,312.22 L489.45,312.02 L493.62,311.80 L497.79,311.57 L501.95,311.31 L506.12,311.04 L510.28,310.76 L514.45,310.45 L518.61,310.14 L522.78,309.80 L526.94,309.45 L531.10,309.08 L535.27,308.70 L539.43,308.31 L543.59,307.90 L547.75,307.47 L551.91,307.04 L556.06,306.59 L560.22,306.12 L564.40,306.60" fill="none" stroke="#1a4a50" stroke-width="1.2" transform="translate(0,-1.1)"/>
<path d="M196.40,278.20 L200.46,279.02 L204.51,280.03 L208.56,281.03 L212.61,282.02 L216.67,283.00 L220.73,283.97 L224.79,284.93 L228.86,285.87 L232.93,286.81 L237.00,287.73 L241.08,288.64 L245.16,289.53 L249.24,290.42 L253.33,291.29 L257.42,292.15 L261.51,292.99 L265.61,293.82 L269.70,294.64 L273.80,295.44 L277.91,296.22 L282.01,297.00 L286.12,297.75 L290.23,298.50 L294.35,299.22 L298.46,299.93 L302.58,300.63 L306.70,301.31 L310.82,301.97 L314.95,302.62 L319.07,303.25 L323.20,303.86 L327.34,304.45 L331.47,305.03 L335.60,305.59 L339.74,306.13 L343.88,306.65 L348.02,307.16 L352.16,307.64 L356.31,308.11 L360.45,308.56 L364.60,308.99 L368.75,309.40 L372.90,309.79 L377.05,310.15 L381.20,310.50 L385.35,310.83 L389.51,311.14 L393.67,311.43 L397.82,311.69 L401.98,311.93 L406.14,312.16 L410.30,312.36 L414.46,312.53 L418.62,312.69 L422.79,312.82 L426.95,312.93 L431.12,313.02 L435.28,313.08 L439.45,313.12 L443.61,313.14 L447.78,313.14 L451.94,313.12 L456.11,313.08 L460.28,313.01 L464.45,312.93 L468.61,312.83 L472.78,312.70 L476.95,312.56 L481.12,312.40 L485.28,312.22 L489.45,312.02 L493.62,311.80 L497.79,311.57 L501.95,311.31 L506.12,311.04 L510.28,310.76 L514.45,310.45 L518.61,310.14 L522.78,309.80 L526.94,309.45 L531.10,309.08 L535.27,308.70 L539.43,308.31 L543.59,307.90 L547.75,307.47 L551.91,307.04 L556.06,306.59 L560.22,306.12 L564.40,306.60" fill="none" stroke="#f050f0" stroke-width="1.4"/>
<path d="M276.10,202.03 L279.10,202.89 L282.10,203.75 L285.10,204.61 L288.10,205.47 L291.10,206.33 L294.10,207.19 L297.10,208.05 L300.10,208.91 L303.10,209.77 L306.10,210.63 L309.10,211.49 L312.10,212.35 L315.10,213.22 L318.10,214.08 L321.10,214.95 L324.10,215.82 L327.10,216.69 L330.10,217.56 L333.10,218.44 L336.10,219.32 L339.10,220.20 L342.10,221.08 L345.10,221.97 L348.10,222.86 L351.10,223.75 L354.10,224.64 L357.10,225.55 L360.10,226.45 L363.10,227.36 L366.10,228.27 L369.10,229.19 L372.10,230.11 L375.10,231.03 L378.10,231.97 L381.10,232.90 L384.10,233.84 L387.10,234.79 L390.10,235.75 L393.10,236.70 L396.10,237.67 L399.10,238.64 L402.10,239.62 L405.10,240.60 L408.10,241.59 L411.10,242.59 L414.10,243.60 L417.10,244.61 L420.10,245.63 L423.10,246.66 L426.10,247.69 L429.10,248.74 L432.10,249.79 L435.10,250.85 L438.10,251.92 L441.10,253.00 L444.10,254.08 L447.10,255.18 L450.10,256.28 L453.10,257.40 L456.10,258.52 L459.10,259.66 L462.10,260.80 L465.10,261.95 L468.10,263.12 L471.10,264.29 L474.10,265.48 L477.10,266.68 L480.10,267.88 L483.10,269.10 L486.10,270.33 L489.10,271.58 L492.10,272.83 L495.10,274.10 L498.10,275.37 L501.10,276.66 L504.10,277.97 L507.10,279.28 L510.10,280.61 L513.10,281.95 L516.10,283.31 L519.10,284.68 L522.10,286.06 L525.10,287.45 L528.10,288.86 L531.10,290.29 L534.10,291.72 L537.10,293.18 L540.10,294.64 L543.10,296.13 L546.10,297.62 L549.10,299.13 L552.10,300.66 L555.10,302.20 L558.10,303.76 L561.10,305.34 L564.10,306.93 L564.40,307.09" fill="none" stroke="#40207a" stroke-width="3.6" stroke-opacity="0.75"/>
<path d="M236.80,213.84 L239.80,214.67 L242.80,215.50 L245.80,216.34 L248.80,217.19 L251.80,218.03 L254.80,218.88 L257.80,219.74 L260.80,220.60 L263.80,221.46 L266.80,222.32 L269.80,223.19 L272.80,224.06 L275.80,224.94 L278.80,225.82 L281.80,226.70 L284.80,227.58 L287.80,228.47 L290.80,229.36 L293.80,230.25 L296.80,231.15 L299.80,232.05 L302.80,232.95 L305.80,233.85 L308.80,234.75 L311.80,235.66 L314.80,236.56 L317.80,237.47 L320.80,238.38 L323.80,239.29 L326.80,240.21 L329.80,241.12 L332.80,242.03 L335.80,242.95 L338.80,243.87 L341.80,244.78 L344.80,245.70 L347.80,246.62 L350.80,247.54 L353.80,248.46 L356.80,249.38 L359.80,250.30 L362.80,251.22 L365.80,252.13 L368.80,253.05 L371.80,253.97 L374.80,254.89 L377.80,255.81 L380.80,256.72 L383.80,257.64 L386.80,258.55 L389.80,259.46 L392.80,260.38 L395.80,261.29 L398.80,262.20 L401.80,263.10 L404.80,264.01 L407.80,264.91 L410.80,265.81 L413.80,266.71 L416.80,267.61 L419.80,268.51 L422.80,269.40 L425.80,270.29 L428.80,271.18 L431.80,272.07 L434.80,272.95 L437.80,273.83 L440.80,274.70 L443.80,275.58 L446.80,276.45 L449.80,277.31 L452.80,278.18 L455.80,279.04 L458.80,279.89 L461.80,280.75 L464.80,281.59 L467.80,282.44 L470.80,283.28 L473.80,284.11 L476.80,284.94 L479.80,285.77 L482.80,286.59 L485.80,287.41 L488.80,288.22 L491.80,289.03 L494.80,289.83 L497.80,290.63 L500.80,291.42 L503.80,292.20 L506.80,292.98 L509.80,293.76 L512.80,294.53 L515.80,295.29 L518.80,296.05 L521.80,296.80 L524.80,297.54 L527.80,298.28 L530.80,299.01 L533.80,299.74 L536.80,300.46 L539.80,301.17 L542.80,301.87 L545.80,302.57 L548.80,303.26 L551.80,303.94 L554.80,304.62 L557.80,305.29 L560.80,305.95 L563.80,306.60 L564.40,306.73" fill="none" stroke="#40207a" stroke-width="3.6" stroke-opacity="0.75"/>
<path d="M276.10,202.03 L279.10,202.89 L282.10,203.75 L285.10,204.61 L288.10,205.47 L291.10,206.33 L294.10,207.19 L297.10,208.05 L300.10,208.91 L303.10,209.77 L306.10,210.63 L309.10,211.49 L312.10,212.35 L315.10,213.22 L318.10,214.08 L321.10,214.95 L324.10,215.82 L327.10,216.69 L330.10,217.56 L333.10,218.44 L336.10,219.32 L339.10,220.20 L342.10,221.08 L345.10,221.97 L348.10,222.86 L351.10,223.75 L354.10,224.64 L357.10,225.55 L360.10,226.45 L363.10,227.36 L366.10,228.27 L369.10,229.19 L372.10,230.11 L375.10,231.03 L378.10,231.97 L381.10,232.90 L384.10,233.84 L387.10,234.79 L390.10,235.75 L393.10,236.70 L396.10,237.67 L399.10,238.64 L402.10,239.62 L405.10,240.60 L408.10,241.59 L411.10,242.59 L414.10,243.60 L417.10,244.61 L420.10,245.63 L423.10,246.66 L426.10,247.69 L429.10,248.74 L432.10,249.79 L435.10,250.85 L438.10,251.92 L441.10,253.00 L444.10,254.08 L447.10,255.18 L450.10,256.28 L453.10,257.40 L456.10,258.52 L459.10,259.66 L462.10,260.80 L465.10,261.95 L468.10,263.12 L471.10,264.29 L474.10,265.48 L477.10,266.68 L480.10,267.88 L483.10,269.10 L486.10,270.33 L489.10,271.58 L492.10,272.83 L495.10,274.10 L498.10,275.37 L501.10,276.66 L504.10,277.97 L507.10,279.28 L510.10,280.61 L513.10,281.95 L516.10,283.31 L519.10,284.68 L522.10,286.06 L525.10,287.45 L528.10,288.86 L531.10,290.29 L534.10,291.72 L537.10,293.18 L540.10,294.64 L543.10,296.13 L546.10,297.62 L549.10,299.13 L552.10,300.66 L555.10,302.20 L558.10,303.76 L561.10,305.34 L564.10,306.93 L564.40,307.09" fill="none" stroke="#00ffff" stroke-width="1.8"/>
<path d="M236.80,213.84 L239.80,214.67 L242.80,215.50 L245.80,216.34 L248.80,217.19 L251.80,218.03 L254.80,218.88 L257.80,219.74 L260.80,220.60 L263.80,221.46 L266.80,222.32 L269.80,223.19 L272.80,224.06 L275.80,224.94 L278.80,225.82 L281.80,226.70 L284.80,227.58 L287.80,228.47 L290.80,229.36 L293.80,230.25 L296.80,231.15 L299.80,232.05 L302.80,232.95 L305.80,233.85 L308.80,234.75 L311.80,235.66 L314.80,236.56 L317.80,237.47 L320.80,238.38 L323.80,239.29 L326.80,240.21 L329.80,241.12 L332.80,242.03 L335.80,242.95 L338.80,243.87 L341.80,244.78 L344.80,245.70 L347.80,246.62 L350.80,247.54 L353.80,248.46 L356.80,249.38 L359.80,250.30 L362.80,251.22 L365.80,252.13 L368.80,253.05 L371.80,253.97 L374.80,254.89 L377.80,255.81 L380.80,256.72 L383.80,257.64 L386.80,258.55 L389.80,259.46 L392.80,260.38 L395.80,261.29 L398.80,262.20 L401.80,263.10 L404.80,264.01 L407.80,264.91 L410.80,265.81 L413.80,266.71 L416.80,267.61 L419.80,268.51 L422.80,269.40 L425.80,270.29 L428.80,271.18 L431.80,272.07 L434.80,272.95 L437.80,273.83 L440.80,274.70 L443.80,275.58 L446.80,276.45 L449.80,277.31 L452.80,278.18 L455.80,279.04 L458.80,279.89 L461.80,280.75 L464.80,281.59 L467.80,282.44 L470.80,283.28 L473.80,284.11 L476.80,284.94 L479.80,285.77 L482.80,286.59 L485.80,287.41 L488.80,288.22 L491.80,289.03 L494.80,289.83 L497.80,290.63 L500.80,291.42 L503.80,292.20 L506.80,292.98 L509.80,293.76 L512.80,294.53 L515.80,295.29 L518.80,296.05 L521.80,296.80 L524.80,297.54 L527.80,298.28 L530.80,299.01 L533.80,299.74 L536.80,300.46 L539.80,301.17 L542.80,301.87 L545.80,302.57 L548.80,303.26 L551.80,303.94 L554.80,304.62 L557.80,305.29 L560.80,305.95 L563.80,306.60 L564.40,306.73" fill="none" stroke="#00ffff" stroke-width="1.8"/>
<circle cx="276.1" cy="201.6" r="1.6" fill="#1a2a9a" fill-opacity="0.6"/><circle cx="276.1" cy="201.6" r="1.1" fill="#f4f020"/><circle cx="236.8" cy="213.9" r="1.6" fill="#1a2a9a" fill-opacity="0.6"/><circle cx="236.8" cy="213.9" r="1.1" fill="#f4f020"/><circle cx="364.1" cy="197.7" r="1.6" fill="#1a2a9a" fill-opacity="0.6"/><circle cx="364.1" cy="197.7" r="1.1" fill="#f4f020"/><circle cx="411.7" cy="241.3" r="1.6" fill="#1a2a9a" fill-opacity="0.6"/><circle cx="411.7" cy="241.3" r="1.1" fill="#f4f020"/><circle cx="473.1" cy="259.8" r="1.6" fill="#1a2a9a" fill-opacity="0.6"/><circle cx="473.1" cy="259.8" r="1.1" fill="#f4f020"/><circle cx="495.9" cy="236.8" r="1.6" fill="#1a2a9a" fill-opacity="0.6"/><circle cx="495.9" cy="236.8" r="1.1" fill="#f4f020"/><circle cx="544.3" cy="256.2" r="1.6" fill="#1a2a9a" fill-opacity="0.6"/><circle cx="544.3" cy="256.2" r="1.1" fill="#f4f020"/><circle cx="372.3" cy="252.6" r="1.6" fill="#1a2a9a" fill-opacity="0.6"/><circle cx="372.3" cy="252.6" r="1.1" fill="#f4f020"/><circle cx="457.4" cy="277.4" r="1.6" fill="#1a2a9a" fill-opacity="0.6"/><circle cx="457.4" cy="277.4" r="1.1" fill="#f4f020"/><circle cx="537.9" cy="307.9" r="1.6" fill="#1a2a9a" fill-opacity="0.6"/><circle cx="537.9" cy="307.9" r="1.1" fill="#f4f020"/><circle cx="196.4" cy="278.2" r="1.3" fill="#e84848"/><circle cx="376.6" cy="313.7" r="1.3" fill="#e84848"/><circle cx="447.3" cy="316.4" r="1.3" fill="#e84848"/>
<rect x="454.7" y="281.4" width="2.2" height="2.2" fill="#40e0e0"/>
<line x1="125" y1="333" x2="697" y2="497" stroke="#303060" stroke-width="0.9" stroke-dasharray="1,3.2"/>
<line x1="660" y1="512.8" x2="697" y2="511.6" stroke="#303060" stroke-width="0.9" stroke-dasharray="1,3"/>
</g>
</svg>
<svg width="6" height="6" viewBox="0 0 6 6" style="position:absolute;left:119.8px;top:332.3px"><path d="M0.8,0.8 L5,5 M5,0.8 L0.8,5" stroke="#000" stroke-width="1.1"/></svg>
<svg width="7" height="6" viewBox="0 0 7 6" style="position:absolute;left:652.8px;top:507.6px"><path d="M0.8,0.6 L3.2,3 L5.6,0.6 M3.2,3 V5.4" fill="none" stroke="#000" stroke-width="1.1"/></svg>
</body></html>
